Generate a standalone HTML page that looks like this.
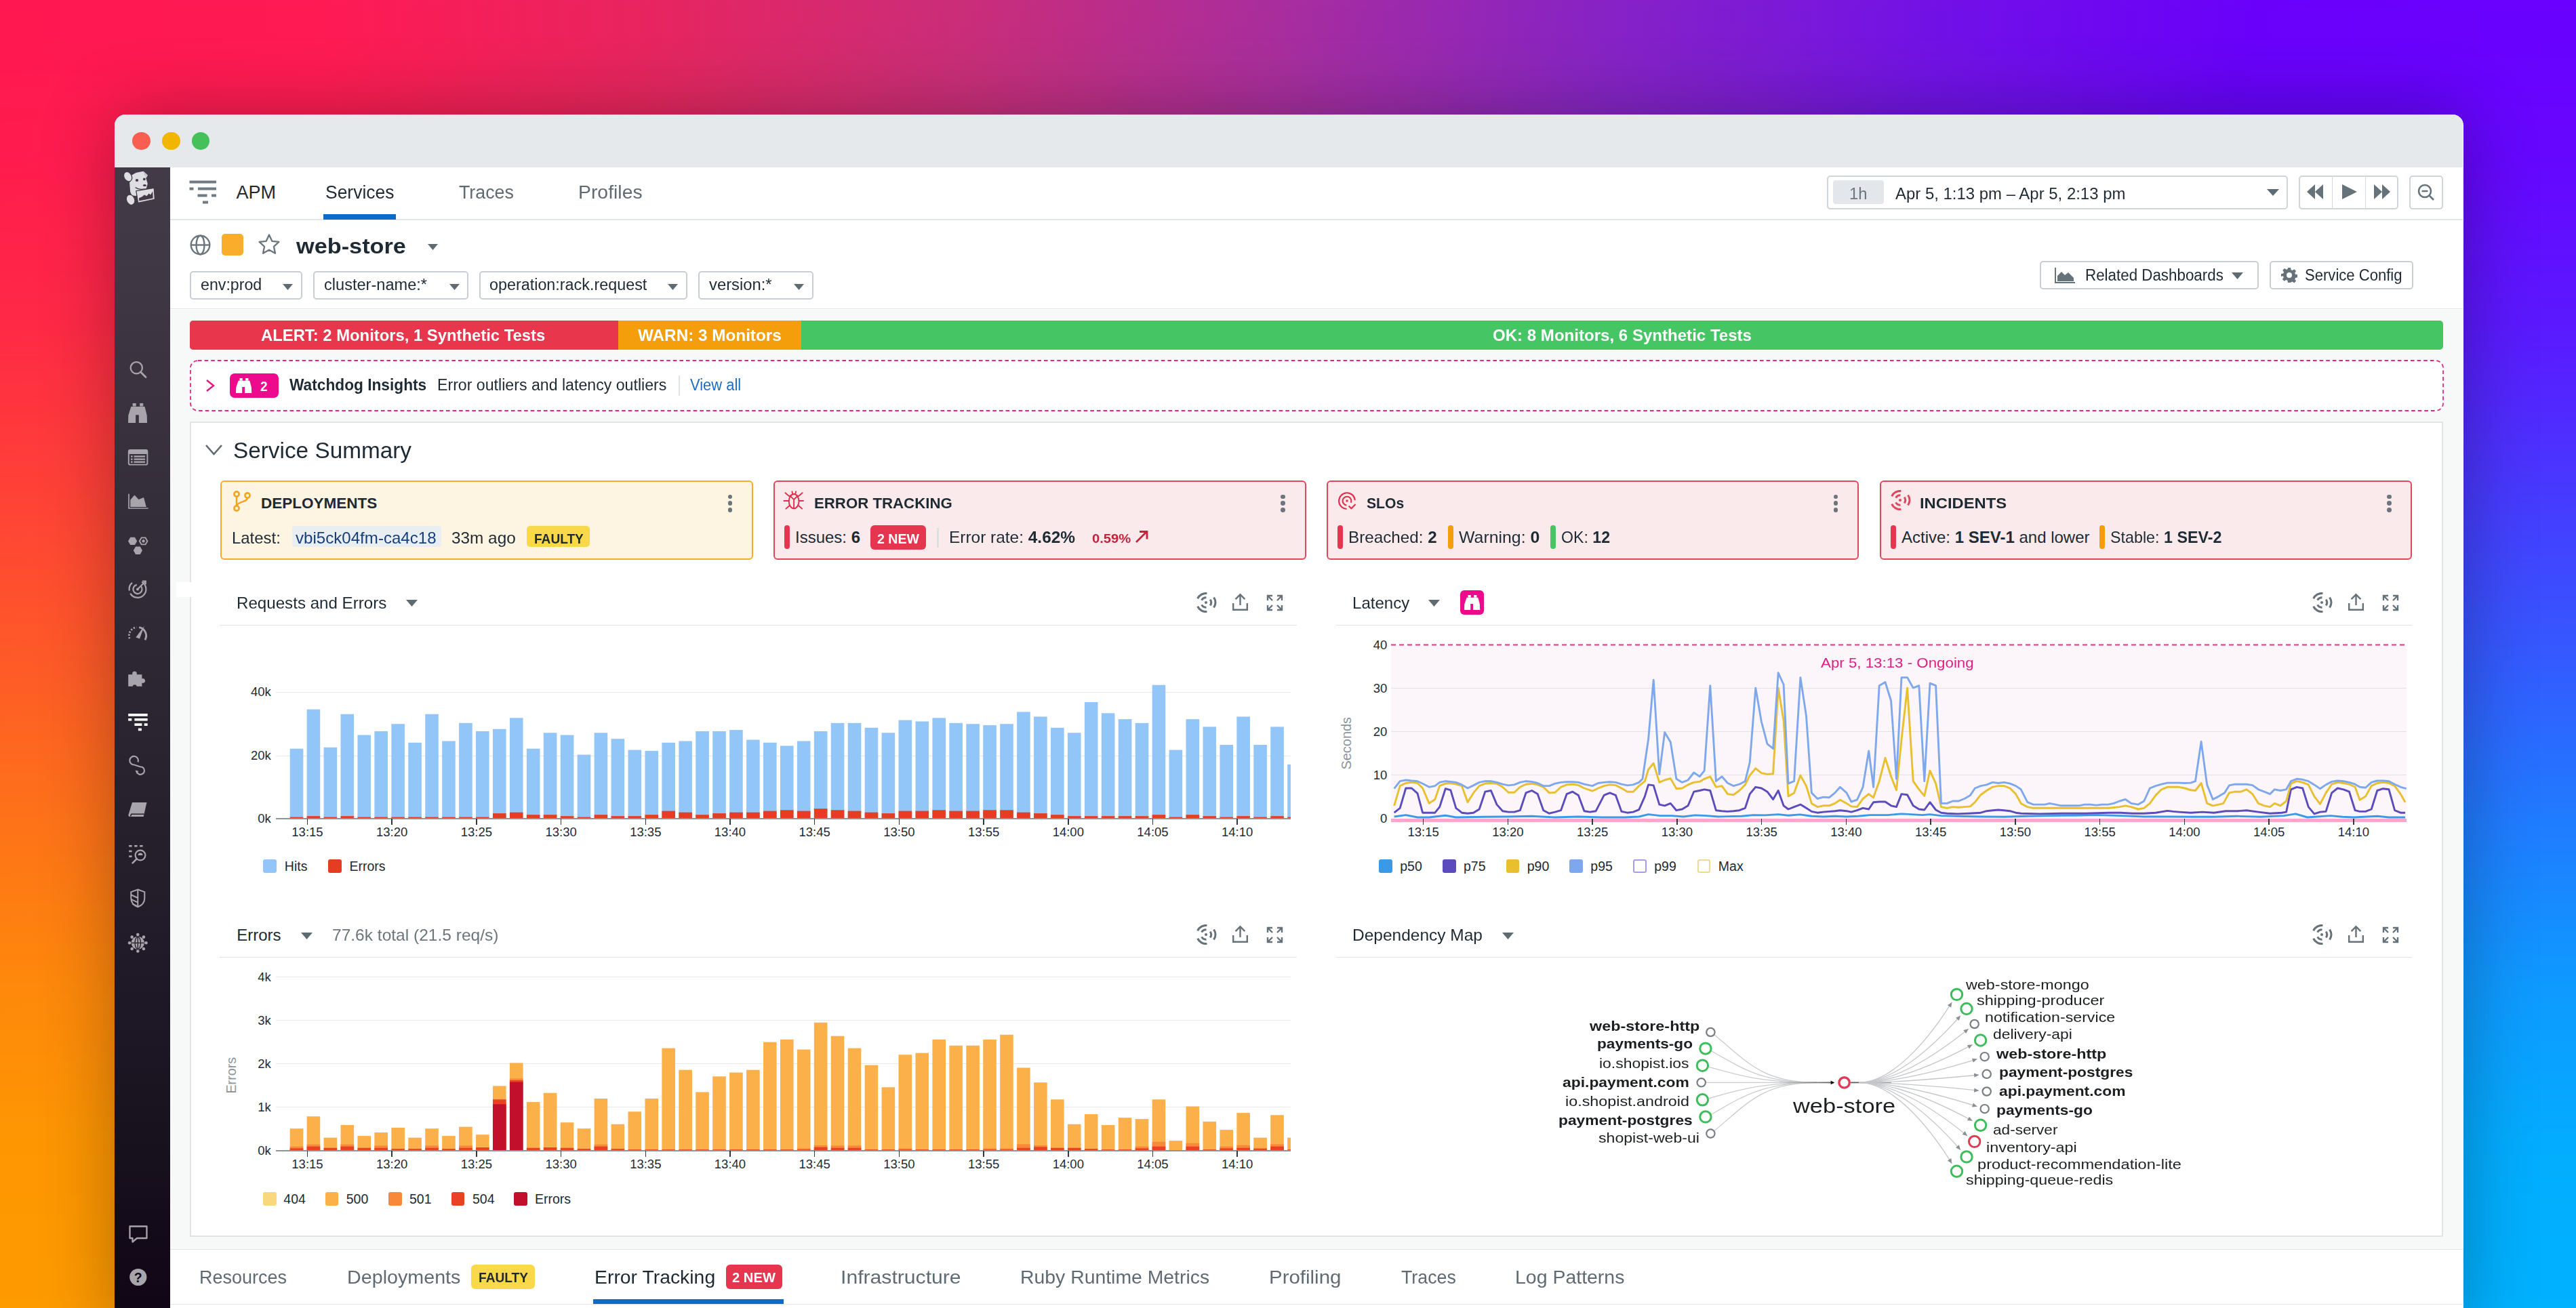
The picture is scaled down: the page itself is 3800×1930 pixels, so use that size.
<!DOCTYPE html><html><head><meta charset="utf-8"><style>
*{margin:0;padding:0;box-sizing:border-box}
html,body{width:3800px;height:1930px;overflow:hidden;font-family:"Liberation Sans",sans-serif}
body{position:relative;background:#ff9a00}
.abs,.t,.box{position:absolute}
.t{white-space:nowrap;transform-origin:0 0}
.box{border:2px solid #cfd4d8;background:#fff}
#bg{position:absolute;left:0;top:0;width:3800px;height:1930px;background:linear-gradient(90deg,#ff1751 0%,#ff1a55 12.5%,#e82460 25%,#ca2d7a 37.5%,#a82d9f 50%,#8722c6 62.5%,#7311e6 75%,#6a00fa 87.5%,#6a00ff 100%)}
#bg2{position:absolute;left:0;top:0;width:3800px;height:1930px;background:linear-gradient(90deg,#fe9b00 0%,#fe9b00 10%,#00b2ff 90%,#00b2ff 100%);
 -webkit-mask-image:linear-gradient(180deg,rgba(0,0,0,0) 0%,rgba(0,0,0,.04) 12.5%,rgba(0,0,0,.14) 25%,rgba(0,0,0,.32) 37.5%,rgba(0,0,0,.5) 50%,rgba(0,0,0,.69) 62.5%,rgba(0,0,0,.86) 75%,rgba(0,0,0,.97) 87.5%,#000 100%);
 mask-image:linear-gradient(180deg,rgba(0,0,0,0) 0%,rgba(0,0,0,.04) 12.5%,rgba(0,0,0,.14) 25%,rgba(0,0,0,.32) 37.5%,rgba(0,0,0,.5) 50%,rgba(0,0,0,.69) 62.5%,rgba(0,0,0,.86) 75%,rgba(0,0,0,.97) 87.5%,#000 100%)}
#win{position:absolute;left:169px;top:169px;width:3464.5px;height:1800px;border-radius:16px;background:#fff;overflow:hidden;
 box-shadow:0 0 110px rgba(0,0,0,.3)}
#titlebar{position:absolute;left:0;top:0;width:3464px;height:78px;background:#e5e9ec}
.tl{position:absolute;top:25.8px;width:26.6px;height:26.6px;border-radius:50%}
#sidebar{position:absolute;left:0;top:78px;width:82px;height:1722px;background:linear-gradient(180deg,#423b47 0%,#3f3844 9.5%,#2e2834 41.4%,#1f1826 70.4%,#17101d 85%,#110616 96.9%,#100515 100%)}
#header{position:absolute;left:82px;top:78px;width:3382px;height:209px;background:#fff;border-bottom:1.5px solid #e3e6e8}
#header:before{content:"";position:absolute;left:0;top:76px;width:3382px;height:1.5px;background:#e3e6e8}
#content{position:absolute;left:82px;top:288px;width:3382px;height:1386px;background:#f7f9f8}
#tabbar{position:absolute;left:82px;top:1674px;width:3382px;height:82px;background:#fff;border-top:1.5px solid #e2e4e6;border-bottom:1.5px solid #e2e4e6}
</style></head><body><div id="bg"></div><div id="bg2"></div>
<div id="win">
  <div id="titlebar"></div>
  <div class="tl" style="left:26.2px;background:#f95f50"></div>
  <div class="tl" style="left:70.2px;background:#f2b600"></div>
  <div class="tl" style="left:113.7px;background:#45c05a"></div>
  <div id="sidebar"></div>
  <div id="header"></div>
  <div id="content"></div>
  <div id="tabbar"></div>
</div>
<svg class="abs" style="left:279px;top:266px" width="41" height="36" viewBox="0 0 41 36">
<g fill="#6f7b82"><rect x="0.5" y="0.5" width="39.5" height="4"/><rect x="0.5" y="10.5" width="6" height="4"/><rect x="13" y="10.5" width="27" height="4"/>
<rect x="12.5" y="20.5" width="14" height="4"/><rect x="33" y="20.5" width="7" height="4"/><rect x="20" y="30.5" width="8" height="4"/></g></svg>
<div class="t" style="left:348.40px;top:271.34px;font-size:27px;line-height:27px;font-weight:400;color:#1d2a33;">APM</div>
<div class="t" style="left:479.80px;top:270.94px;font-size:27px;line-height:27px;font-weight:400;color:#1d2a33;transform:scaleX(0.9803);">Services</div>
<div class="t" style="left:676.50px;top:270.94px;font-size:27px;line-height:27px;font-weight:400;color:#5f6b72;transform:scaleX(0.9922);">Traces</div>
<div class="t" style="left:852.60px;top:270.94px;font-size:27px;line-height:27px;font-weight:400;color:#5f6b72;transform:scaleX(1.0506);">Profiles</div>
<div class="abs" style="left:477.4px;top:316px;width:106.6px;height:8px;background:#0b6bcb"></div>
<div class="box" style="left:2695px;top:258.6px;width:680px;height:50px;border-radius:5px"></div>
<div class="abs" style="left:2703.6px;top:266.4px;width:75.4px;height:34.6px;background:#e3e7ec;border-radius:4px"></div>
<div class="t" style="left:2727.60px;top:275.03px;font-size:23px;line-height:23px;font-weight:400;color:#6b767d;transform:scaleX(1.0341);">1h</div>
<div class="t" style="left:2795.60px;top:274.61px;font-size:23.5px;line-height:23.5px;font-weight:400;color:#1d2a33;transform:scaleX(1.0189);">Apr 5, 1:13 pm – Apr 5, 2:13 pm</div>
<svg class="abs" style="left:3343.5px;top:279px" width="18" height="10"><path d="M0 0h18L9 10z" fill="#5f6b72"/></svg>
<div class="box" style="left:3390.7px;top:258.6px;width:147.3px;height:50px;border-radius:5px"></div>
<div class="abs" style="left:3440px;top:259px;width:1px;height:49px;background:#d5d9dd"></div>
<div class="abs" style="left:3489px;top:259px;width:1px;height:49px;background:#d5d9dd"></div>
<div class="box" style="left:3553.7px;top:258.6px;width:50px;height:50px;border-radius:5px"></div>
<svg class="abs" style="left:3403px;top:272px" width="26" height="22" viewBox="0 0 26 22"><g fill="#66727a"><path d="M12 0v22L0 11z"/><path d="M24 0v22L12 11z"/></g></svg>
<svg class="abs" style="left:3455px;top:272px" width="22" height="22" viewBox="0 0 22 22"><path d="M0 0l22 11L0 22z" fill="#66727a"/></svg>
<svg class="abs" style="left:3502px;top:272px" width="26" height="22" viewBox="0 0 26 22"><g fill="#66727a"><path d="M0 0v22L12 11z"/><path d="M12 0v22L24 11z"/></g></svg>
<svg class="abs" style="left:3566px;top:271px" width="26" height="26" viewBox="0 0 26 26"><g fill="none" stroke="#66727a" stroke-width="2.6"><circle cx="11" cy="11" r="9"/><path d="M17.5 17.5L24 24M6.5 11h9"/></g></svg>
<svg class="abs" style="left:280px;top:346px" width="31" height="31" viewBox="0 0 31 31"><g fill="none" stroke="#6a767d" stroke-width="2.4">
<circle cx="15.5" cy="15.5" r="13.8"/><ellipse cx="15.5" cy="15.5" rx="6" ry="13.8"/><path d="M1.7 15.5h27.6"/></g></svg>
<div class="abs" style="left:326.6px;top:345.4px;width:32.3px;height:32px;background:#f9ad2b;border-radius:5px"></div>
<svg class="abs" style="left:380px;top:344px" width="34" height="33" viewBox="0 0 34 33"><path d="M17 2.5l4.3 9.3 10.1 1.1-7.5 6.9 2.1 10-9-5.1-9 5.1 2.1-10-7.5-6.9 10.1-1.1z" fill="none" stroke="#6a767d" stroke-width="2.3" stroke-linejoin="round"/></svg>
<div class="t" style="left:437.37px;top:346.91px;font-size:32px;line-height:32px;font-weight:700;color:#1d2a33;transform:scaleX(1.0710);">web-store</div>
<svg class="abs" style="left:631px;top:360px" width="15" height="9"><path d="M0 0h15L7.5 9z" fill="#5f6b72"/></svg>
<div class="box" style="left:280px;top:399.5px;width:165.60000000000002px;height:42px;border-radius:5px;border-color:#c9ced3"></div><div class="t" style="left:296.00px;top:409.11px;font-size:23.5px;line-height:23.5px;font-weight:400;color:#1d2a33;transform:scaleX(0.9867);">env:prod</div><svg class="abs" style="left:417.1px;top:419px" width="15" height="9"><path d="M0 0h15L7.5 9z" fill="#5f6b72"/></svg>
<div class="box" style="left:462px;top:399.5px;width:229px;height:42px;border-radius:5px;border-color:#c9ced3"></div><div class="t" style="left:478.00px;top:409.11px;font-size:23.5px;line-height:23.5px;font-weight:400;color:#1d2a33;transform:scaleX(1.0036);">cluster-name:*</div><svg class="abs" style="left:662.5px;top:419px" width="15" height="9"><path d="M0 0h15L7.5 9z" fill="#5f6b72"/></svg>
<div class="box" style="left:707px;top:399.5px;width:306.5px;height:42px;border-radius:5px;border-color:#c9ced3"></div><div class="t" style="left:722.20px;top:409.11px;font-size:23.5px;line-height:23.5px;font-weight:400;color:#1d2a33;transform:scaleX(0.9935);">operation:rack.request</div><svg class="abs" style="left:985.0px;top:419px" width="15" height="9"><path d="M0 0h15L7.5 9z" fill="#5f6b72"/></svg>
<div class="box" style="left:1029.5px;top:399.5px;width:170.0px;height:42px;border-radius:5px;border-color:#c9ced3"></div><div class="t" style="left:1046.00px;top:409.11px;font-size:23.5px;line-height:23.5px;font-weight:400;color:#1d2a33;transform:scaleX(1.0130);">version:*</div><svg class="abs" style="left:1171.0px;top:419px" width="15" height="9"><path d="M0 0h15L7.5 9z" fill="#5f6b72"/></svg>
<div class="box" style="left:3008.7px;top:384.8px;width:323.3px;height:42.2px;border-radius:5px;border-color:#c9ced3"></div>
<div class="box" style="left:3348px;top:384.8px;width:211.6px;height:42.2px;border-radius:5px;border-color:#c9ced3"></div>
<svg class="abs" style="left:3031px;top:395px" width="30" height="23" viewBox="0 0 30 23"><path d="M1 0v22h29" fill="none" stroke="#66727a" stroke-width="2"/><path d="M4 20V12l6-6 5 5 5-4 8 8v5z" fill="#66727a"/></svg>
<svg class="abs" style="left:3292px;top:402px" width="17" height="10"><path d="M0 0h17L8.5 10z" fill="#5f6b72"/></svg>
<svg class="abs" style="left:3365px;top:394px" width="24" height="24" viewBox="0 0 24 24"><path fill="#66727a" d="M10 1h4l.6 3.2 2 .9 2.7-1.9 2.8 2.8-1.9 2.7.9 2 3.2.6v4l-3.2.6-.9 2 1.9 2.7-2.8 2.8-2.7-1.9-2 .9L14 23h-4l-.6-3.2-2-.9-2.7 1.9-2.8-2.8 1.9-2.7-.9-2L0 14v-4l3.2-.6.9-2L2.2 4.7 5 1.9l2.7 1.9 2-.9zM12 8a4 4 0 100 8 4 4 0 000-8z"/></svg>
<div class="t" style="left:3075.90px;top:395.23px;font-size:23px;line-height:23px;font-weight:400;color:#1d2a33;transform:scaleX(0.9721);">Related Dashboards</div>
<div class="t" style="left:3400.00px;top:395.23px;font-size:23px;line-height:23px;font-weight:400;color:#1d2a33;transform:scaleX(0.9598);">Service Config</div>
<div class="abs" style="left:280px;top:473px;width:3324px;height:43px;border-radius:5px;overflow:hidden;background:#45c563">
<div class="abs" style="left:0;top:0;width:632px;height:43px;background:#e8364c"></div>
<div class="abs" style="left:632px;top:0;width:270px;height:43px;background:#f59e0b"></div></div>
<div class="t" style="left:385.40px;top:482.86px;font-size:24.5px;line-height:24.5px;font-weight:700;color:#fff;transform:scaleX(0.9724);">ALERT: 2 Monitors, 1 Synthetic Tests</div>
<div class="t" style="left:941.00px;top:482.86px;font-size:24.5px;line-height:24.5px;font-weight:700;color:#fff;transform:scaleX(0.9909);">WARN: 3 Monitors</div>
<div class="t" style="left:2202.40px;top:482.86px;font-size:24.5px;line-height:24.5px;font-weight:700;color:#fff;transform:scaleX(0.9822);">OK: 8 Monitors, 6 Synthetic Tests</div>
<svg class="abs" style="left:279.5px;top:530.5px" width="3326" height="77"><rect x="1" y="1" width="3323" height="74" rx="11" fill="#fff" stroke="#e0287f" stroke-width="1.8" stroke-dasharray="5.6 4"/></svg>
<svg class="abs" style="left:303px;top:559px" width="15" height="20"><path d="M2 2l10 8-10 8" fill="none" stroke="#e5177f" stroke-width="2.4"/></svg>
<div class="abs" style="left:339px;top:551.2px;width:72.3px;height:35.5px;background:#ee0a8c;border-radius:7px"></div>
<svg class="abs" style="left:348.3px;top:557.7px" width="24" height="23" viewBox="0 0 24 23"><path fill="#fff" d="M5.5 0h4.2v3.5H5.5zM14.2 0h4.2v3.5h-4.2zM3.6 3.8h16.7l2.6 9.7.3 8.6H13.1v-9H9.2v9H0l.3-8.6z"/></svg>
<div class="t" style="left:384.40px;top:560.37px;font-size:20px;line-height:20px;font-weight:700;color:#fff;transform:scaleX(0.9550);">2</div>
<div class="t" style="left:426.70px;top:557.41px;font-size:23.5px;line-height:23.5px;font-weight:700;color:#1d2a33;transform:scaleX(0.9662);">Watchdog Insights</div>
<div class="t" style="left:645.20px;top:557.41px;font-size:23.5px;line-height:23.5px;font-weight:400;color:#1d2a33;transform:scaleX(0.9850);">Error outliers and latency outliers</div>
<div class="abs" style="left:1001px;top:554px;width:2px;height:29.5px;background:#dfe3e6"></div>
<div class="t" style="left:1017.80px;top:557.41px;font-size:23.5px;line-height:23.5px;font-weight:400;color:#1a6cc4;transform:scaleX(0.9329);">View all</div>
<div class="box" style="left:280px;top:622px;width:3324px;height:1202.5px;border-color:#e2e4e4;border-radius:0"></div>
<svg class="abs" style="left:302px;top:655px" width="27" height="18"><path d="M2 2l11.5 13L25 2" fill="none" stroke="#5f6b72" stroke-width="2.6"/></svg>
<div class="t" style="left:343.50px;top:647.87px;font-size:33px;line-height:33px;font-weight:400;color:#1d2a33;transform:scaleX(1.0101);">Service Summary</div>
<div class="abs" style="left:260px;top:859px;width:22px;height:21.5px;background:#fff"></div>
<div class="box" style="left:324.7px;top:708.6px;width:786.3px;height:117.9px;border-radius:6px;background:#fdf4e2;border:2px solid #f2ac2a"></div>
<div class="box" style="left:1141px;top:708.6px;width:786px;height:117.9px;border-radius:6px;background:#fbeaec;border:2px solid #e3455c"></div>
<div class="box" style="left:1956.5px;top:708.6px;width:785.8000000000002px;height:117.9px;border-radius:6px;background:#fbeaec;border:2px solid #e3455c"></div>
<div class="box" style="left:2772.7px;top:708.6px;width:785.3000000000002px;height:117.9px;border-radius:6px;background:#fbeaec;border:2px solid #e3455c"></div>
<div class="abs" style="left:1073.6px;top:729.6px;width:6.8px;height:6.8px;border-radius:3.4px;background:#6b757b"></div><div class="abs" style="left:1073.6px;top:739.4px;width:6.8px;height:6.8px;border-radius:3.4px;background:#6b757b"></div><div class="abs" style="left:1073.6px;top:749.2px;width:6.8px;height:6.8px;border-radius:3.4px;background:#6b757b"></div>
<div class="abs" style="left:1889.1px;top:729.6px;width:6.8px;height:6.8px;border-radius:3.4px;background:#6b757b"></div><div class="abs" style="left:1889.1px;top:739.4px;width:6.8px;height:6.8px;border-radius:3.4px;background:#6b757b"></div><div class="abs" style="left:1889.1px;top:749.2px;width:6.8px;height:6.8px;border-radius:3.4px;background:#6b757b"></div>
<div class="abs" style="left:2704.6px;top:729.6px;width:6.8px;height:6.8px;border-radius:3.4px;background:#6b757b"></div><div class="abs" style="left:2704.6px;top:739.4px;width:6.8px;height:6.8px;border-radius:3.4px;background:#6b757b"></div><div class="abs" style="left:2704.6px;top:749.2px;width:6.8px;height:6.8px;border-radius:3.4px;background:#6b757b"></div>
<div class="abs" style="left:3521.2px;top:729.6px;width:6.8px;height:6.8px;border-radius:3.4px;background:#6b757b"></div><div class="abs" style="left:3521.2px;top:739.4px;width:6.8px;height:6.8px;border-radius:3.4px;background:#6b757b"></div><div class="abs" style="left:3521.2px;top:749.2px;width:6.8px;height:6.8px;border-radius:3.4px;background:#6b757b"></div>
<svg class="abs" style="left:344px;top:724px" width="27" height="31" viewBox="0 0 27 31"><g fill="none" stroke="#f2a51f" stroke-width="2.6">
<circle cx="5" cy="5" r="3.6"/><circle cx="21" cy="7" r="3.6"/><circle cx="5" cy="26" r="3.6"/><path d="M5 8.6v13.8M21 10.6c0 7-15 5-15.6 11.6"/></g></svg>
<div class="t" style="left:385.00px;top:732.25px;font-size:22.5px;line-height:22.5px;font-weight:700;color:#1d2a33;">DEPLOYMENTS</div>
<div class="t" style="left:341.70px;top:782.28px;font-size:24px;line-height:24px;font-weight:400;color:#1d2a33;transform:scaleX(0.9972);">Latest:</div>
<div class="abs" style="left:430.6px;top:776px;width:220.4px;height:30.7px;background:#e9eef3;border-radius:4px"></div>
<div class="t" style="left:436.40px;top:782.28px;font-size:24px;line-height:24px;font-weight:400;color:#173f7a;transform:scaleX(1.0041);">vbi5ck04fm-ca4c18</div>
<div class="t" style="left:666.30px;top:782.28px;font-size:24px;line-height:24px;font-weight:400;color:#1d2a33;transform:scaleX(1.0144);">33m ago</div>
<div class="abs" style="left:777.3px;top:776px;width:93px;height:30.7px;background:#f9d94a;border-radius:5px"></div>
<div class="t" style="left:787.60px;top:784.67px;font-size:20px;line-height:20px;font-weight:700;color:#1d2a33;transform:scaleX(0.9541);">FAULTY</div>
<svg class="abs" style="left:1150px;top:718px" width="50" height="40" viewBox="0 0 50 40"><g fill="none" stroke="#e02e4b" stroke-width="1.9" stroke-linecap="round">
<ellipse cx="21.1" cy="21.6" rx="7.4" ry="10.6"/><path d="M15.6 13.6L21.1 19.2 26.6 13.6M21.1 19.2V32M18.4 7.2L19.1 10.4M24.1 7.2L23.4 10.4M8.4 9.3L14.4 14.4M33.6 9.3L27.6 14.4M6.4 21H13.6M28.6 21H35M9.4 32.6L14.4 28.2M33.2 32.6L28.2 28.2"/></g></svg>
<div class="t" style="left:1200.70px;top:732.05px;font-size:22.5px;line-height:22.5px;font-weight:700;color:#1d2a33;transform:scaleX(0.9878);">ERROR TRACKING</div>
<div class="abs" style="left:1157px;top:775.3px;width:8px;height:35.0px;border-radius:4px;background:#e5354f"></div>
<div class="t" style="left:1173.00px;top:781.08px;font-size:24px;line-height:24px;color:#1c2b34;"><span style="font-weight:400;color:#1c2b34">Issues: </span><span style="font-weight:700;color:#1c2b34">6</span></div>
<div class="abs" style="left:1284.4px;top:775.3px;width:81.2px;height:35.7px;background:#e5354f;border-radius:6px"></div>
<div class="t" style="left:1294.00px;top:783.62px;font-size:21px;line-height:21px;font-weight:700;color:#fff;transform:scaleX(0.9314);">2 NEW</div>
<div class="abs" style="left:1382px;top:778.5px;width:2.5px;height:29.3px;background:#dde0e3"></div>
<div class="t" style="left:1400.00px;top:781.08px;font-size:24px;line-height:24px;color:#1c2b34;transform:scaleX(1.0179);"><span style="font-weight:400;color:#1c2b34">Error rate: </span><span style="font-weight:700;color:#1c2b34">4.62%</span></div>
<div class="t" style="left:1610.70px;top:785.32px;font-size:19px;line-height:19px;font-weight:700;color:#c4233b;transform:scaleX(1.0638);">0.59%</div>
<svg class="abs" style="left:1674px;top:782px" width="21" height="20" viewBox="0 0 21 20"><path d="M2 18L17 3M7 2.5h11v11" fill="none" stroke="#c4233b" stroke-width="2.8"/></svg>
<svg class="abs" style="left:1965px;top:718px" width="50" height="40" viewBox="0 0 50 40"><g fill="none" stroke="#e02e4b" stroke-width="2.1"><path d="M33.85 20.06A11.9 11.9 0 1 0 21.58 32.99"/><path d="M27.80 23.80A6.4 6.4 0 1 0 21.44 27.48"/><path d="M24.5 28.6L28.4 32.2 34.6 26"/></g><rect x="20.5" y="19.5" width="3" height="3" fill="#e02e4b"/></svg>
<div class="t" style="left:2016.40px;top:732.05px;font-size:22.5px;line-height:22.5px;font-weight:700;color:#1d2a33;transform:scaleX(0.9383);">SLOs</div>
<div class="abs" style="left:1972.8px;top:775.3px;width:8px;height:35.0px;border-radius:4px;background:#e5354f"></div>
<div class="abs" style="left:2135.8px;top:775.3px;width:8px;height:35.0px;border-radius:4px;background:#f59e0b"></div>
<div class="abs" style="left:2287px;top:775.3px;width:8px;height:35.0px;border-radius:4px;background:#45c563"></div>
<div class="t" style="left:1989.30px;top:781.08px;font-size:24px;line-height:24px;color:#1c2b34;transform:scaleX(1.0101);"><span style="font-weight:400;color:#1c2b34">Breached: </span><span style="font-weight:700;color:#1c2b34">2</span></div>
<div class="t" style="left:2151.70px;top:781.08px;font-size:24px;line-height:24px;color:#1c2b34;transform:scaleX(1.0362);"><span style="font-weight:400;color:#1c2b34">Warning: </span><span style="font-weight:700;color:#1c2b34">0</span></div>
<div class="t" style="left:2303.00px;top:781.08px;font-size:24px;line-height:24px;color:#1c2b34;transform:scaleX(0.9645);"><span style="font-weight:400;color:#1c2b34">OK: </span><span style="font-weight:700;color:#1c2b34">12</span></div>
<svg class="abs" style="left:2788.20px;top:722.80px" width="32" height="30" viewBox="0 0 32 30"><path d="M16.42 1.47A13.6 13.6 0 0 0 2.67 9.25 M2.67 20.75A13.6 13.6 0 0 0 16.42 28.53 M15.50 7.82A7.2 7.2 0 0 0 8.64 11.62 M8.64 18.38A7.2 7.2 0 0 0 15.50 22.18 M21.15 10.53A7.6 7.6 0 0 1 21.15 19.47 M26.57 7.48A13.8 13.8 0 0 1 26.57 22.52" fill="none" stroke="#e3455c" stroke-width="3" /><circle cx="15" cy="15" r="2.1" fill="#e3455c"/></svg>
<div class="t" style="left:2831.80px;top:732.05px;font-size:22.5px;line-height:22.5px;font-weight:700;color:#1d2a33;transform:scaleX(1.0571);">INCIDENTS</div>
<div class="abs" style="left:2789px;top:775.3px;width:8px;height:35.0px;border-radius:4px;background:#e5354f"></div>
<div class="abs" style="left:3097px;top:775.3px;width:8px;height:35.0px;border-radius:4px;background:#f59e0b"></div>
<div class="t" style="left:2805.00px;top:781.08px;font-size:24px;line-height:24px;color:#1c2b34;"><span style="font-weight:400;color:#1c2b34">Active: </span><span style="font-weight:700;color:#1c2b34">1 SEV-1</span><span style="font-weight:400;color:#1c2b34"> and lower</span></div>
<div class="t" style="left:3113.00px;top:781.08px;font-size:24px;line-height:24px;color:#1c2b34;transform:scaleX(0.9707);"><span style="font-weight:400;color:#1c2b34">Stable: </span><span style="font-weight:700;color:#1c2b34">1 SEV-2</span></div>
<div class="t" style="left:349.20px;top:877.68px;font-size:24px;line-height:24px;font-weight:400;color:#1d2a33;transform:scaleX(1.0055);">Requests and Errors</div><svg class="abs" style="left:599.4px;top:885.4px" width="17" height="10"><path d="M0 0h17L8.5 10z" fill="#5f6b72"/></svg><div class="abs" style="left:324px;top:921.5px;width:1589px;height:1.6px;background:#e1e4e6"></div><svg class="abs" style="left:1763.90px;top:873.90px" width="32" height="30" viewBox="0 0 32 30"><path d="M16.42 1.47A13.6 13.6 0 0 0 2.67 9.25 M2.67 20.75A13.6 13.6 0 0 0 16.42 28.53 M15.50 7.82A7.2 7.2 0 0 0 8.64 11.62 M8.64 18.38A7.2 7.2 0 0 0 15.50 22.18 M21.15 10.53A7.6 7.6 0 0 1 21.15 19.47 M26.57 7.48A13.8 13.8 0 0 1 26.57 22.52" fill="none" stroke="#66727a" stroke-width="3" /><circle cx="15" cy="15" r="2.1" fill="#66727a"/></svg><svg class="abs" style="left:1815px;top:874px" width="30" height="28" viewBox="0 0 30 28"><g fill="none" stroke="#66727a" stroke-width="2.4"><path d="M4.2 16v9.8h20.6V16M14.5 19V3.2M7.6 10.2l6.9-7 6.9 7"/></g></svg>
<svg class="abs" style="left:1868px;top:877px" width="25" height="25" viewBox="0 0 25 25"><g fill="none" stroke="#66727a" stroke-width="2.4"><path d="M2 9V2h7M2 2l7 7M23 9V2h-7M23 2l-7 7M2 16v7h7M2 23l7-7M23 16v7h-7M23 23l-7-7"/></g></svg><div class="abs" style="left:406.7px;top:1020.5px;width:1497px;height:1.2px;background:#e4e6e8"></div><div class="t" style="left:369.92px;top:1012.14px;font-size:18.5px;line-height:18.5px;font-weight:400;color:#1d2a33;">40k</div><div class="abs" style="left:406.7px;top:1114.5px;width:1497px;height:1.2px;background:#e4e6e8"></div><div class="t" style="left:369.92px;top:1106.14px;font-size:18.5px;line-height:18.5px;font-weight:400;color:#1d2a33;">20k</div><div class="t" style="left:380.19px;top:1199.14px;font-size:18.5px;line-height:18.5px;font-weight:400;color:#1d2a33;">0k</div><svg class="abs" style="left:0;top:0" width="3800" height="1930"><defs><clipPath id="c1"><rect x="406" y="900" width="1498" height="320"/></clipPath></defs><g clip-path="url(#c1)"><rect x="427.70" y="1104.68" width="19.6" height="103.32" fill="#92c5f8"/><rect x="427.70" y="1205.60" width="19.6" height="2.40" fill="#e53d21"/><rect x="452.64" y="1046.71" width="19.6" height="161.29" fill="#92c5f8"/><rect x="452.64" y="1204.20" width="19.6" height="3.80" fill="#e53d21"/><rect x="477.58" y="1102.81" width="19.6" height="105.19" fill="#92c5f8"/><rect x="477.58" y="1205.60" width="19.6" height="2.40" fill="#e53d21"/><rect x="502.52" y="1053.72" width="19.6" height="154.28" fill="#92c5f8"/><rect x="502.52" y="1204.20" width="19.6" height="3.80" fill="#e53d21"/><rect x="527.46" y="1084.58" width="19.6" height="123.42" fill="#92c5f8"/><rect x="527.46" y="1205.60" width="19.6" height="2.40" fill="#e53d21"/><rect x="552.40" y="1078.97" width="19.6" height="129.03" fill="#92c5f8"/><rect x="552.40" y="1205.60" width="19.6" height="2.40" fill="#e53d21"/><rect x="577.34" y="1068.22" width="19.6" height="139.78" fill="#92c5f8"/><rect x="577.34" y="1205.60" width="19.6" height="2.40" fill="#e53d21"/><rect x="602.28" y="1095.80" width="19.6" height="112.20" fill="#92c5f8"/><rect x="602.28" y="1205.60" width="19.6" height="2.40" fill="#e53d21"/><rect x="627.22" y="1053.72" width="19.6" height="154.28" fill="#92c5f8"/><rect x="627.22" y="1205.60" width="19.6" height="2.40" fill="#e53d21"/><rect x="652.16" y="1093.46" width="19.6" height="114.54" fill="#92c5f8"/><rect x="652.16" y="1205.60" width="19.6" height="2.40" fill="#e53d21"/><rect x="677.10" y="1066.82" width="19.6" height="141.19" fill="#92c5f8"/><rect x="677.10" y="1205.60" width="19.6" height="2.40" fill="#e53d21"/><rect x="702.04" y="1078.97" width="19.6" height="129.03" fill="#92c5f8"/><rect x="702.04" y="1205.60" width="19.6" height="2.40" fill="#e53d21"/><rect x="726.98" y="1075.70" width="19.6" height="132.30" fill="#92c5f8"/><rect x="726.98" y="1200.10" width="19.6" height="7.90" fill="#e53d21"/><rect x="751.92" y="1059.34" width="19.6" height="148.67" fill="#92c5f8"/><rect x="751.92" y="1198.70" width="19.6" height="9.30" fill="#e53d21"/><rect x="776.86" y="1104.68" width="19.6" height="103.32" fill="#92c5f8"/><rect x="776.86" y="1202.20" width="19.6" height="5.80" fill="#e53d21"/><rect x="801.80" y="1081.31" width="19.6" height="126.69" fill="#92c5f8"/><rect x="801.80" y="1202.20" width="19.6" height="5.80" fill="#e53d21"/><rect x="826.74" y="1084.58" width="19.6" height="123.42" fill="#92c5f8"/><rect x="826.74" y="1204.20" width="19.6" height="3.80" fill="#e53d21"/><rect x="851.68" y="1113.57" width="19.6" height="94.44" fill="#92c5f8"/><rect x="851.68" y="1205.60" width="19.6" height="2.40" fill="#e53d21"/><rect x="876.62" y="1081.31" width="19.6" height="126.69" fill="#92c5f8"/><rect x="876.62" y="1202.20" width="19.6" height="5.80" fill="#e53d21"/><rect x="901.56" y="1090.19" width="19.6" height="117.81" fill="#92c5f8"/><rect x="901.56" y="1204.20" width="19.6" height="3.80" fill="#e53d21"/><rect x="926.50" y="1106.55" width="19.6" height="101.45" fill="#92c5f8"/><rect x="926.50" y="1204.20" width="19.6" height="3.80" fill="#e53d21"/><rect x="951.44" y="1107.95" width="19.6" height="100.04" fill="#92c5f8"/><rect x="951.44" y="1202.20" width="19.6" height="5.80" fill="#e53d21"/><rect x="976.38" y="1095.80" width="19.6" height="112.20" fill="#92c5f8"/><rect x="976.38" y="1196.60" width="19.6" height="11.40" fill="#e53d21"/><rect x="1001.32" y="1093.46" width="19.6" height="114.54" fill="#92c5f8"/><rect x="1001.32" y="1198.70" width="19.6" height="9.30" fill="#e53d21"/><rect x="1026.26" y="1078.97" width="19.6" height="129.03" fill="#92c5f8"/><rect x="1026.26" y="1202.20" width="19.6" height="5.80" fill="#e53d21"/><rect x="1051.20" y="1078.97" width="19.6" height="129.03" fill="#92c5f8"/><rect x="1051.20" y="1200.10" width="19.6" height="7.90" fill="#e53d21"/><rect x="1076.14" y="1077.10" width="19.6" height="130.90" fill="#92c5f8"/><rect x="1076.14" y="1198.70" width="19.6" height="9.30" fill="#e53d21"/><rect x="1101.08" y="1091.59" width="19.6" height="116.41" fill="#92c5f8"/><rect x="1101.08" y="1198.70" width="19.6" height="9.30" fill="#e53d21"/><rect x="1126.02" y="1095.80" width="19.6" height="112.20" fill="#92c5f8"/><rect x="1126.02" y="1196.60" width="19.6" height="11.40" fill="#e53d21"/><rect x="1150.96" y="1100.47" width="19.6" height="107.53" fill="#92c5f8"/><rect x="1150.96" y="1195.30" width="19.6" height="12.70" fill="#e53d21"/><rect x="1175.90" y="1093.46" width="19.6" height="114.54" fill="#92c5f8"/><rect x="1175.90" y="1196.60" width="19.6" height="11.40" fill="#e53d21"/><rect x="1200.84" y="1078.97" width="19.6" height="129.03" fill="#92c5f8"/><rect x="1200.84" y="1193.20" width="19.6" height="14.80" fill="#e53d21"/><rect x="1225.78" y="1066.82" width="19.6" height="141.19" fill="#92c5f8"/><rect x="1225.78" y="1195.30" width="19.6" height="12.70" fill="#e53d21"/><rect x="1250.72" y="1066.82" width="19.6" height="141.19" fill="#92c5f8"/><rect x="1250.72" y="1196.60" width="19.6" height="11.40" fill="#e53d21"/><rect x="1275.66" y="1073.83" width="19.6" height="134.17" fill="#92c5f8"/><rect x="1275.66" y="1198.70" width="19.6" height="9.30" fill="#e53d21"/><rect x="1300.60" y="1081.31" width="19.6" height="126.69" fill="#92c5f8"/><rect x="1300.60" y="1200.10" width="19.6" height="7.90" fill="#e53d21"/><rect x="1325.54" y="1062.61" width="19.6" height="145.39" fill="#92c5f8"/><rect x="1325.54" y="1196.60" width="19.6" height="11.40" fill="#e53d21"/><rect x="1350.48" y="1064.48" width="19.6" height="143.52" fill="#92c5f8"/><rect x="1350.48" y="1196.60" width="19.6" height="11.40" fill="#e53d21"/><rect x="1375.42" y="1059.34" width="19.6" height="148.67" fill="#92c5f8"/><rect x="1375.42" y="1195.30" width="19.6" height="12.70" fill="#e53d21"/><rect x="1400.36" y="1066.82" width="19.6" height="141.19" fill="#92c5f8"/><rect x="1400.36" y="1196.60" width="19.6" height="11.40" fill="#e53d21"/><rect x="1425.30" y="1068.22" width="19.6" height="139.78" fill="#92c5f8"/><rect x="1425.30" y="1196.60" width="19.6" height="11.40" fill="#e53d21"/><rect x="1450.24" y="1070.09" width="19.6" height="137.91" fill="#92c5f8"/><rect x="1450.24" y="1195.30" width="19.6" height="12.70" fill="#e53d21"/><rect x="1475.18" y="1068.22" width="19.6" height="139.78" fill="#92c5f8"/><rect x="1475.18" y="1195.30" width="19.6" height="12.70" fill="#e53d21"/><rect x="1500.12" y="1050.45" width="19.6" height="157.55" fill="#92c5f8"/><rect x="1500.12" y="1198.70" width="19.6" height="9.30" fill="#e53d21"/><rect x="1525.06" y="1057.46" width="19.6" height="150.54" fill="#92c5f8"/><rect x="1525.06" y="1200.10" width="19.6" height="7.90" fill="#e53d21"/><rect x="1550.00" y="1073.83" width="19.6" height="134.17" fill="#92c5f8"/><rect x="1550.00" y="1202.20" width="19.6" height="5.80" fill="#e53d21"/><rect x="1574.94" y="1081.31" width="19.6" height="126.69" fill="#92c5f8"/><rect x="1574.94" y="1204.20" width="19.6" height="3.80" fill="#e53d21"/><rect x="1599.88" y="1035.96" width="19.6" height="172.04" fill="#92c5f8"/><rect x="1599.88" y="1204.20" width="19.6" height="3.80" fill="#e53d21"/><rect x="1624.82" y="1052.32" width="19.6" height="155.68" fill="#92c5f8"/><rect x="1624.82" y="1204.20" width="19.6" height="3.80" fill="#e53d21"/><rect x="1649.76" y="1061.20" width="19.6" height="146.80" fill="#92c5f8"/><rect x="1649.76" y="1204.20" width="19.6" height="3.80" fill="#e53d21"/><rect x="1674.70" y="1066.82" width="19.6" height="141.19" fill="#92c5f8"/><rect x="1674.70" y="1204.20" width="19.6" height="3.80" fill="#e53d21"/><rect x="1699.64" y="1010.71" width="19.6" height="197.29" fill="#92c5f8"/><rect x="1699.64" y="1202.20" width="19.6" height="5.80" fill="#e53d21"/><rect x="1724.58" y="1106.55" width="19.6" height="101.45" fill="#92c5f8"/><rect x="1724.58" y="1205.60" width="19.6" height="2.40" fill="#e53d21"/><rect x="1749.52" y="1061.20" width="19.6" height="146.80" fill="#92c5f8"/><rect x="1749.52" y="1202.20" width="19.6" height="5.80" fill="#e53d21"/><rect x="1774.46" y="1072.42" width="19.6" height="135.57" fill="#92c5f8"/><rect x="1774.46" y="1204.20" width="19.6" height="3.80" fill="#e53d21"/><rect x="1799.40" y="1099.07" width="19.6" height="108.93" fill="#92c5f8"/><rect x="1799.40" y="1205.60" width="19.6" height="2.40" fill="#e53d21"/><rect x="1824.34" y="1057.46" width="19.6" height="150.54" fill="#92c5f8"/><rect x="1824.34" y="1204.20" width="19.6" height="3.80" fill="#e53d21"/><rect x="1849.28" y="1099.07" width="19.6" height="108.93" fill="#92c5f8"/><rect x="1849.28" y="1205.60" width="19.6" height="2.40" fill="#e53d21"/><rect x="1874.22" y="1072.42" width="19.6" height="135.57" fill="#92c5f8"/><rect x="1874.22" y="1204.20" width="19.6" height="3.80" fill="#e53d21"/><rect x="1899.16" y="1128.06" width="19.6" height="79.94" fill="#92c5f8"/><rect x="1899.16" y="1205.60" width="19.6" height="2.40" fill="#e53d21"/></g></svg><div class="abs" style="left:406.7px;top:1207.2px;width:1497px;height:1.8px;background:#8d959a"></div><div class="abs" style="left:452.75px;top:1208px;width:1.5px;height:9px;background:#2f3a40"></div><div class="t" style="left:430.33px;top:1219.04px;font-size:18.5px;line-height:18.5px;font-weight:400;color:#1d2a33;">13:15</div><div class="abs" style="left:577.45px;top:1208px;width:1.5px;height:9px;background:#2f3a40"></div><div class="t" style="left:555.03px;top:1219.04px;font-size:18.5px;line-height:18.5px;font-weight:400;color:#1d2a33;">13:20</div><div class="abs" style="left:702.15px;top:1208px;width:1.5px;height:9px;background:#2f3a40"></div><div class="t" style="left:679.73px;top:1219.04px;font-size:18.5px;line-height:18.5px;font-weight:400;color:#1d2a33;">13:25</div><div class="abs" style="left:826.85px;top:1208px;width:1.5px;height:9px;background:#2f3a40"></div><div class="t" style="left:804.43px;top:1219.04px;font-size:18.5px;line-height:18.5px;font-weight:400;color:#1d2a33;">13:30</div><div class="abs" style="left:951.55px;top:1208px;width:1.5px;height:9px;background:#2f3a40"></div><div class="t" style="left:929.13px;top:1219.04px;font-size:18.5px;line-height:18.5px;font-weight:400;color:#1d2a33;">13:35</div><div class="abs" style="left:1076.25px;top:1208px;width:1.5px;height:9px;background:#2f3a40"></div><div class="t" style="left:1053.83px;top:1219.04px;font-size:18.5px;line-height:18.5px;font-weight:400;color:#1d2a33;">13:40</div><div class="abs" style="left:1200.95px;top:1208px;width:1.5px;height:9px;background:#2f3a40"></div><div class="t" style="left:1178.53px;top:1219.04px;font-size:18.5px;line-height:18.5px;font-weight:400;color:#1d2a33;">13:45</div><div class="abs" style="left:1325.65px;top:1208px;width:1.5px;height:9px;background:#2f3a40"></div><div class="t" style="left:1303.23px;top:1219.04px;font-size:18.5px;line-height:18.5px;font-weight:400;color:#1d2a33;">13:50</div><div class="abs" style="left:1450.35px;top:1208px;width:1.5px;height:9px;background:#2f3a40"></div><div class="t" style="left:1427.93px;top:1219.04px;font-size:18.5px;line-height:18.5px;font-weight:400;color:#1d2a33;">13:55</div><div class="abs" style="left:1575.05px;top:1208px;width:1.5px;height:9px;background:#2f3a40"></div><div class="t" style="left:1552.63px;top:1219.04px;font-size:18.5px;line-height:18.5px;font-weight:400;color:#1d2a33;">14:00</div><div class="abs" style="left:1699.75px;top:1208px;width:1.5px;height:9px;background:#2f3a40"></div><div class="t" style="left:1677.33px;top:1219.04px;font-size:18.5px;line-height:18.5px;font-weight:400;color:#1d2a33;">14:05</div><div class="abs" style="left:1824.45px;top:1208px;width:1.5px;height:9px;background:#2f3a40"></div><div class="t" style="left:1802.03px;top:1219.04px;font-size:18.5px;line-height:18.5px;font-weight:400;color:#1d2a33;">14:10</div><div class="abs" style="left:388.1px;top:1268px;width:19.6px;height:19.6px;border-radius:3px;background:#92c5f8"></div><div class="t" style="left:419.80px;top:1268.79px;font-size:19.5px;line-height:19.5px;font-weight:400;color:#1d2a33;">Hits</div><div class="abs" style="left:484.1px;top:1268px;width:19.6px;height:19.6px;border-radius:3px;background:#e53d21"></div><div class="t" style="left:515.50px;top:1268.79px;font-size:19.5px;line-height:19.5px;font-weight:400;color:#1d2a33;">Errors</div><div class="t" style="left:1994.70px;top:877.68px;font-size:24px;line-height:24px;font-weight:400;color:#1d2a33;transform:scaleX(1.0021);">Latency</div><svg class="abs" style="left:2107px;top:885.4px" width="17" height="10"><path d="M0 0h17L8.5 10z" fill="#5f6b72"/></svg><div class="abs" style="left:2153.6px;top:871.3px;width:35.4px;height:35.5px;background:#ee0a8c;border-radius:6px"></div><svg class="abs" style="left:2159.6px;top:878px" width="24" height="23" viewBox="0 0 24 23"><path fill="#fff" d="M5.5 0h4.2v3.5H5.5zM14.2 0h4.2v3.5h-4.2zM3.6 3.8h16.7l2.6 9.7.3 8.6H13.1v-9H9.2v9H0l.3-8.6z"/></svg><div class="abs" style="left:1970.6px;top:921.5px;width:1587px;height:1.6px;background:#e1e4e6"></div><svg class="abs" style="left:3409.90px;top:873.90px" width="32" height="30" viewBox="0 0 32 30"><path d="M16.42 1.47A13.6 13.6 0 0 0 2.67 9.25 M2.67 20.75A13.6 13.6 0 0 0 16.42 28.53 M15.50 7.82A7.2 7.2 0 0 0 8.64 11.62 M8.64 18.38A7.2 7.2 0 0 0 15.50 22.18 M21.15 10.53A7.6 7.6 0 0 1 21.15 19.47 M26.57 7.48A13.8 13.8 0 0 1 26.57 22.52" fill="none" stroke="#66727a" stroke-width="3" /><circle cx="15" cy="15" r="2.1" fill="#66727a"/></svg><svg class="abs" style="left:3461px;top:874px" width="30" height="28" viewBox="0 0 30 28"><g fill="none" stroke="#66727a" stroke-width="2.4"><path d="M4.2 16v9.8h20.6V16M14.5 19V3.2M7.6 10.2l6.9-7 6.9 7"/></g></svg>
<svg class="abs" style="left:3514px;top:877px" width="25" height="25" viewBox="0 0 25 25"><g fill="none" stroke="#66727a" stroke-width="2.4"><path d="M2 9V2h7M2 2l7 7M23 9V2h-7M23 2l-7 7M2 16v7h7M2 23l7-7M23 16v7h-7M23 23l-7-7"/></g></svg><div class="abs" style="left:2052.2px;top:951.5px;width:1497.6px;height:256.5px;background:#fcf5f9"></div><div class="abs" style="left:2052.2px;top:1143.10px;width:1497.6px;height:1.3px;background:#e4e1e4"></div><div class="abs" style="left:2052.2px;top:1079.00px;width:1497.6px;height:1.3px;background:#e4e1e4"></div><div class="abs" style="left:2052.2px;top:1014.90px;width:1497.6px;height:1.3px;background:#e4e1e4"></div><div class="t" style="left:2036.03px;top:1198.94px;font-size:18.5px;line-height:18.5px;font-weight:400;color:#1d2a33;">0</div><div class="t" style="left:2025.76px;top:1134.84px;font-size:18.5px;line-height:18.5px;font-weight:400;color:#1d2a33;">10</div><div class="t" style="left:2025.76px;top:1070.74px;font-size:18.5px;line-height:18.5px;font-weight:400;color:#1d2a33;">20</div><div class="t" style="left:2025.76px;top:1006.64px;font-size:18.5px;line-height:18.5px;font-weight:400;color:#1d2a33;">30</div><div class="t" style="left:2025.76px;top:942.54px;font-size:18.5px;line-height:18.5px;font-weight:400;color:#1d2a33;">40</div><svg class="abs" style="left:2052px;top:949px" width="1500" height="5"><path d="M0 2.5H1498" stroke="#e8318a" stroke-width="2.2" stroke-dasharray="7 5"/></svg><div class="abs" style="left:2052.2px;top:1208px;width:1497.6px;height:5px;background:#f7a9cb"></div><div class="t" style="left:2686.00px;top:966.52px;font-size:21px;line-height:21px;font-weight:400;color:#e01f84;transform:scaleX(1.0620);">Apr 5, 13:13 - Ongoing</div><div class="t" style="left:1949.06px;top:1087.25px;width:75.89px;font-size:19.5px;line-height:19.5px;color:#8d959a;text-align:center;transform-origin:50% 50%;transform:rotate(-90deg) scaleX(1.022)">Seconds</div><svg class="abs" style="left:0;top:0" width="3800" height="1930"><defs><clipPath id="c2"><rect x="2052" y="940" width="1498" height="272"/></clipPath></defs><g clip-path="url(#c2)" fill="none" stroke-width="2.9" stroke-linejoin="round"><path d="M2056.6 1205.0 L2073.8 1202.6 L2091.0 1206.0 L2108.2 1206.0 L2132.3 1203.3 L2147.8 1206.0 L2190.8 1205.3 L2225.2 1205.0 L2259.6 1204.3 L2294.0 1206.0 L2328.4 1205.0 L2362.8 1206.0 L2397.2 1206.0 L2417.8 1205.0 L2431.6 1201.6 L2448.8 1203.6 L2466.0 1203.6 L2483.2 1205.0 L2500.4 1202.9 L2517.6 1203.6 L2534.8 1205.0 L2569.2 1204.3 L2586.4 1202.6 L2603.6 1202.9 L2623.2 1201.6 L2638.0 1203.3 L2655.2 1201.9 L2672.4 1204.3 L2689.6 1205.0 L2706.8 1204.3 L2724.0 1205.0 L2741.2 1204.3 L2758.4 1202.6 L2784.4 1202.6 L2805.0 1200.9 L2818.8 1201.6 L2836.0 1202.6 L2847.0 1201.6 L2863.5 1203.6 L2887.6 1204.3 L2922.0 1205.0 L2956.4 1205.3 L2990.8 1204.3 L3025.2 1203.6 L3059.6 1203.3 L3094.0 1202.6 L3128.4 1203.6 L3162.8 1205.0 L3197.2 1205.0 L3231.6 1205.3 L3266.0 1205.3 L3300.4 1204.3 L3334.8 1205.3 L3369.2 1203.6 L3386.4 1200.9 L3403.6 1206.0 L3438.0 1203.6 L3455.2 1205.3 L3472.4 1206.0 L3506.8 1204.3 L3524.0 1206.0 L3548.1 1206.0" stroke="#3a9ae8"/><path d="M2056.6 1199.2 L2065.2 1192.3 L2073.8 1163.0 L2082.4 1163.0 L2091.0 1170.6 L2098.6 1199.2 L2108.2 1199.2 L2116.8 1199.2 L2123.7 1190.6 L2132.3 1163.7 L2139.9 1165.8 L2147.8 1192.3 L2156.4 1199.2 L2165.0 1200.2 L2173.6 1199.2 L2182.2 1194.0 L2190.8 1168.2 L2199.4 1166.5 L2208.0 1187.1 L2216.6 1196.7 L2225.2 1198.1 L2233.8 1198.1 L2242.4 1195.7 L2251.0 1169.9 L2259.6 1166.5 L2268.2 1171.6 L2276.8 1195.7 L2285.4 1200.2 L2294.0 1198.1 L2302.6 1195.7 L2311.2 1171.6 L2319.8 1168.2 L2328.4 1173.4 L2337.0 1196.7 L2345.6 1198.1 L2354.2 1196.7 L2366.2 1173.4 L2374.8 1169.9 L2383.4 1173.4 L2392.0 1197.4 L2400.6 1199.2 L2409.2 1198.1 L2417.8 1194.7 L2426.4 1175.1 L2431.6 1157.9 L2439.2 1158.9 L2447.8 1187.1 L2455.7 1188.8 L2464.3 1185.4 L2472.9 1195.7 L2481.5 1194.0 L2490.1 1188.8 L2498.7 1168.2 L2507.3 1166.5 L2514.2 1164.8 L2522.8 1166.5 L2531.4 1195.7 L2540.0 1196.7 L2548.6 1197.4 L2557.2 1196.7 L2565.8 1195.7 L2574.4 1192.3 L2581.2 1171.6 L2589.8 1161.3 L2598.4 1163.0 L2607.0 1168.2 L2615.6 1179.5 L2623.2 1166.5 L2631.1 1188.8 L2638.0 1194.0 L2646.6 1190.6 L2655.9 1187.1 L2664.5 1192.3 L2672.4 1197.4 L2681.0 1199.2 L2689.6 1198.1 L2698.2 1197.4 L2706.8 1196.7 L2714.4 1195.7 L2724.0 1196.7 L2730.9 1198.1 L2739.5 1195.7 L2748.1 1192.3 L2756.7 1194.0 L2763.6 1183.7 L2772.2 1183.0 L2781.0 1183.0 L2789.6 1188.8 L2797.5 1190.6 L2805.0 1171.6 L2813.6 1172.7 L2822.2 1188.8 L2830.8 1194.0 L2838.8 1195.0 L2847.0 1183.7 L2855.6 1195.0 L2863.5 1199.2 L2872.1 1200.2 L2887.6 1200.9 L2904.8 1200.2 L2922.0 1199.2 L2930.6 1196.7 L2939.2 1195.7 L2947.8 1195.0 L2956.4 1195.7 L2965.0 1196.7 L2973.6 1199.2 L2981.2 1200.2 L3008.0 1200.9 L3042.4 1200.2 L3076.8 1200.2 L3111.2 1199.2 L3128.4 1199.2 L3145.6 1200.2 L3162.8 1200.2 L3180.0 1199.2 L3197.2 1196.4 L3205.8 1197.4 L3214.4 1198.1 L3231.6 1199.2 L3248.8 1198.1 L3266.0 1199.2 L3283.2 1196.7 L3300.4 1196.7 L3314.2 1195.7 L3331.4 1198.1 L3348.6 1200.2 L3365.8 1199.2 L3372.6 1198.1 L3379.5 1164.8 L3388.1 1161.3 L3396.7 1163.0 L3405.3 1190.6 L3413.9 1200.9 L3422.5 1198.1 L3431.1 1197.4 L3439.7 1169.9 L3448.3 1163.0 L3456.9 1164.8 L3465.5 1168.2 L3474.1 1195.7 L3481.0 1197.4 L3489.6 1197.4 L3498.2 1194.0 L3506.8 1166.5 L3515.4 1163.7 L3524.0 1164.8 L3532.6 1195.7 L3541.2 1199.2 L3548.1 1199.2" stroke="#5b4cbd"/><path d="M2056.6 1188.8 L2065.2 1159.6 L2073.8 1155.5 L2082.4 1154.4 L2091.0 1155.5 L2098.6 1163.0 L2108.2 1185.4 L2116.8 1179.5 L2123.7 1159.6 L2132.3 1156.2 L2139.9 1155.5 L2147.8 1157.2 L2156.4 1159.6 L2165.0 1183.7 L2173.6 1169.9 L2182.2 1159.6 L2190.8 1156.2 L2199.4 1155.5 L2208.0 1156.2 L2216.6 1161.3 L2225.2 1169.2 L2233.8 1169.2 L2242.4 1161.3 L2251.0 1157.2 L2259.6 1156.2 L2268.2 1157.9 L2276.8 1161.3 L2285.4 1169.9 L2294.0 1169.2 L2302.6 1161.3 L2311.2 1157.9 L2319.8 1157.2 L2328.4 1158.6 L2337.0 1163.0 L2349.0 1167.2 L2357.6 1163.0 L2366.2 1159.6 L2374.8 1157.9 L2383.4 1158.6 L2392.0 1163.0 L2400.6 1168.2 L2409.2 1168.2 L2417.8 1159.6 L2426.4 1152.7 L2431.6 1135.5 L2439.2 1126.2 L2447.8 1154.4 L2455.7 1151.0 L2464.3 1148.6 L2472.9 1163.7 L2481.5 1163.0 L2490.1 1157.9 L2498.7 1154.4 L2507.3 1153.4 L2514.2 1149.3 L2522.8 1145.8 L2531.4 1161.3 L2540.0 1159.6 L2548.6 1171.6 L2557.2 1172.7 L2565.8 1166.5 L2574.4 1157.9 L2581.2 1144.1 L2589.8 1133.8 L2598.4 1140.7 L2607.0 1142.4 L2615.6 1141.7 L2623.2 1015.1 L2631.1 1063.3 L2638.0 1175.1 L2646.6 1169.9 L2655.9 1144.1 L2664.5 1159.6 L2672.4 1185.4 L2681.0 1190.6 L2689.6 1188.8 L2698.2 1188.8 L2706.8 1185.4 L2714.4 1180.2 L2724.0 1185.4 L2730.9 1189.9 L2739.5 1190.6 L2748.1 1178.5 L2756.7 1171.6 L2763.6 1176.8 L2772.2 1152.7 L2781.0 1118.3 L2789.6 1145.8 L2797.5 1165.8 L2805.0 1090.8 L2813.6 1015.1 L2822.2 1152.7 L2830.8 1164.8 L2838.8 1174.4 L2847.0 1137.2 L2855.6 1156.2 L2863.5 1190.6 L2872.1 1192.3 L2880.7 1190.6 L2889.3 1191.2 L2897.9 1190.6 L2906.5 1189.9 L2913.4 1183.7 L2922.0 1172.7 L2930.6 1166.5 L2939.2 1161.3 L2947.8 1159.6 L2956.4 1159.6 L2965.0 1163.0 L2973.6 1171.6 L2981.2 1185.4 L2990.8 1190.6 L2999.4 1192.3 L3008.0 1192.3 L3016.6 1192.3 L3025.2 1192.3 L3042.4 1192.3 L3059.6 1192.3 L3076.8 1192.3 L3094.0 1192.3 L3111.2 1192.3 L3126.7 1190.6 L3135.3 1188.8 L3143.9 1190.6 L3154.2 1194.0 L3162.8 1192.3 L3171.4 1185.4 L3180.0 1173.4 L3188.6 1164.8 L3197.2 1161.3 L3205.8 1161.3 L3214.4 1161.3 L3223.0 1163.0 L3231.6 1165.8 L3238.5 1166.5 L3247.1 1155.5 L3255.7 1185.4 L3264.3 1188.8 L3272.9 1187.1 L3279.8 1185.4 L3288.4 1169.9 L3297.0 1168.2 L3305.6 1168.2 L3314.2 1164.8 L3322.8 1171.6 L3331.4 1185.4 L3340.0 1188.8 L3348.6 1190.6 L3355.4 1185.4 L3364.0 1188.8 L3372.6 1182.0 L3379.5 1156.2 L3388.1 1152.7 L3396.7 1154.4 L3405.3 1157.9 L3413.9 1175.1 L3422.5 1186.4 L3431.1 1169.9 L3439.7 1157.2 L3448.3 1154.4 L3456.9 1155.5 L3465.5 1157.2 L3474.1 1161.3 L3481.0 1180.2 L3489.6 1175.1 L3498.2 1159.6 L3506.8 1155.5 L3515.4 1154.4 L3524.0 1155.5 L3532.6 1159.6 L3541.2 1171.6 L3548.1 1183.7" stroke="#e9bf2e"/><path d="M2056.6 1163.7 L2065.2 1152.7 L2073.8 1151.0 L2082.4 1152.0 L2091.0 1152.7 L2098.6 1156.2 L2108.2 1161.3 L2116.8 1159.6 L2123.7 1154.4 L2132.3 1152.7 L2139.9 1153.4 L2147.8 1154.4 L2156.4 1157.9 L2165.0 1163.0 L2173.6 1158.9 L2182.2 1154.4 L2190.8 1152.7 L2199.4 1152.7 L2208.0 1154.4 L2216.6 1157.2 L2225.2 1158.9 L2233.8 1157.9 L2242.4 1154.4 L2251.0 1152.7 L2259.6 1153.4 L2268.2 1155.5 L2276.8 1159.6 L2285.4 1159.6 L2294.0 1156.2 L2302.6 1154.4 L2311.2 1153.7 L2319.8 1153.7 L2328.4 1154.4 L2337.0 1157.2 L2349.0 1159.6 L2357.6 1155.5 L2366.2 1154.4 L2374.8 1153.7 L2383.4 1154.4 L2392.0 1157.2 L2400.6 1158.9 L2409.2 1157.9 L2417.8 1154.4 L2423.0 1149.3 L2431.6 1090.8 L2439.2 1003.1 L2447.8 1142.4 L2455.7 1080.5 L2464.3 1094.9 L2472.9 1149.3 L2481.5 1154.4 L2490.1 1151.0 L2498.7 1140.0 L2507.3 1145.8 L2514.2 1137.2 L2522.8 1011.7 L2531.4 1152.7 L2540.0 1145.8 L2548.6 1155.5 L2557.2 1159.6 L2565.8 1157.2 L2574.4 1152.7 L2581.2 1125.2 L2589.8 1015.1 L2598.4 1065.0 L2607.0 1097.7 L2615.6 1104.6 L2623.2 992.8 L2631.1 1010.0 L2638.0 1156.2 L2646.6 1152.7 L2655.9 999.6 L2664.5 1056.4 L2672.4 1169.9 L2681.0 1178.5 L2689.6 1176.1 L2698.2 1176.8 L2706.8 1169.9 L2714.4 1161.3 L2724.0 1169.9 L2730.9 1183.0 L2739.5 1180.2 L2748.1 1161.3 L2756.7 1108.0 L2763.6 1161.3 L2772.2 1011.7 L2781.0 1006.5 L2789.6 1034.0 L2797.5 1149.3 L2805.0 999.6 L2813.6 999.6 L2822.2 1015.1 L2830.8 1011.7 L2838.8 1152.7 L2847.0 1008.2 L2855.6 1011.7 L2863.5 1185.4 L2872.1 1185.4 L2880.7 1182.0 L2889.3 1182.0 L2897.9 1178.5 L2906.5 1173.4 L2913.4 1163.0 L2922.0 1159.6 L2930.6 1157.9 L2939.2 1154.4 L2947.8 1155.5 L2956.4 1154.4 L2965.0 1156.2 L2973.6 1159.6 L2981.2 1164.8 L2990.8 1183.7 L2999.4 1187.1 L3008.0 1187.1 L3016.6 1187.1 L3023.5 1185.4 L3032.1 1187.1 L3040.7 1188.8 L3049.3 1188.8 L3057.9 1188.8 L3066.5 1188.8 L3075.1 1187.1 L3083.7 1187.1 L3092.3 1188.1 L3100.9 1187.1 L3109.5 1187.1 L3118.1 1185.4 L3126.7 1182.0 L3135.3 1179.5 L3143.9 1185.4 L3154.2 1187.1 L3162.8 1182.0 L3171.4 1163.0 L3180.0 1159.6 L3188.6 1157.2 L3197.2 1155.1 L3205.8 1155.1 L3214.4 1155.1 L3223.0 1155.5 L3231.6 1155.1 L3238.5 1152.7 L3247.1 1094.2 L3255.7 1157.9 L3264.3 1179.5 L3272.9 1175.1 L3281.5 1169.9 L3288.4 1158.9 L3297.0 1157.2 L3305.6 1157.2 L3314.2 1157.2 L3322.8 1158.6 L3331.4 1164.8 L3340.0 1168.2 L3348.6 1171.6 L3355.4 1164.8 L3364.0 1166.5 L3372.6 1164.8 L3379.5 1152.7 L3388.1 1149.3 L3396.7 1150.3 L3405.3 1152.7 L3413.9 1157.9 L3422.5 1163.7 L3431.1 1157.9 L3439.7 1153.4 L3448.3 1152.0 L3456.9 1152.7 L3465.5 1154.4 L3474.1 1157.2 L3481.0 1161.3 L3489.6 1162.3 L3498.2 1154.4 L3506.8 1152.0 L3515.4 1152.0 L3524.0 1152.7 L3532.6 1157.2 L3541.2 1161.3 L3549.8 1163.7" stroke="#7ea8ee"/></g></svg><div class="abs" style="left:2098.85px;top:1208px;width:1.5px;height:9px;background:#2f3a40"></div><div class="t" style="left:2076.43px;top:1219.04px;font-size:18.5px;line-height:18.5px;font-weight:400;color:#1d2a33;">13:15</div><div class="abs" style="left:2223.60px;top:1208px;width:1.5px;height:9px;background:#2f3a40"></div><div class="t" style="left:2201.18px;top:1219.04px;font-size:18.5px;line-height:18.5px;font-weight:400;color:#1d2a33;">13:20</div><div class="abs" style="left:2348.35px;top:1208px;width:1.5px;height:9px;background:#2f3a40"></div><div class="t" style="left:2325.93px;top:1219.04px;font-size:18.5px;line-height:18.5px;font-weight:400;color:#1d2a33;">13:25</div><div class="abs" style="left:2473.10px;top:1208px;width:1.5px;height:9px;background:#2f3a40"></div><div class="t" style="left:2450.68px;top:1219.04px;font-size:18.5px;line-height:18.5px;font-weight:400;color:#1d2a33;">13:30</div><div class="abs" style="left:2597.85px;top:1208px;width:1.5px;height:9px;background:#2f3a40"></div><div class="t" style="left:2575.43px;top:1219.04px;font-size:18.5px;line-height:18.5px;font-weight:400;color:#1d2a33;">13:35</div><div class="abs" style="left:2722.60px;top:1208px;width:1.5px;height:9px;background:#2f3a40"></div><div class="t" style="left:2700.18px;top:1219.04px;font-size:18.5px;line-height:18.5px;font-weight:400;color:#1d2a33;">13:40</div><div class="abs" style="left:2847.35px;top:1208px;width:1.5px;height:9px;background:#2f3a40"></div><div class="t" style="left:2824.93px;top:1219.04px;font-size:18.5px;line-height:18.5px;font-weight:400;color:#1d2a33;">13:45</div><div class="abs" style="left:2972.10px;top:1208px;width:1.5px;height:9px;background:#2f3a40"></div><div class="t" style="left:2949.68px;top:1219.04px;font-size:18.5px;line-height:18.5px;font-weight:400;color:#1d2a33;">13:50</div><div class="abs" style="left:3096.85px;top:1208px;width:1.5px;height:9px;background:#2f3a40"></div><div class="t" style="left:3074.43px;top:1219.04px;font-size:18.5px;line-height:18.5px;font-weight:400;color:#1d2a33;">13:55</div><div class="abs" style="left:3221.60px;top:1208px;width:1.5px;height:9px;background:#2f3a40"></div><div class="t" style="left:3199.18px;top:1219.04px;font-size:18.5px;line-height:18.5px;font-weight:400;color:#1d2a33;">14:00</div><div class="abs" style="left:3346.35px;top:1208px;width:1.5px;height:9px;background:#2f3a40"></div><div class="t" style="left:3323.93px;top:1219.04px;font-size:18.5px;line-height:18.5px;font-weight:400;color:#1d2a33;">14:05</div><div class="abs" style="left:3471.10px;top:1208px;width:1.5px;height:9px;background:#2f3a40"></div><div class="t" style="left:3448.68px;top:1219.04px;font-size:18.5px;line-height:18.5px;font-weight:400;color:#1d2a33;">14:10</div><div class="abs" style="left:2034.3px;top:1268px;width:19.6px;height:19.6px;border-radius:3px;background:#3a9ae8"></div><div class="t" style="left:2065.20px;top:1268.79px;font-size:19.5px;line-height:19.5px;font-weight:400;color:#1d2a33;">p50</div><div class="abs" style="left:2128.2px;top:1268px;width:19.6px;height:19.6px;border-radius:3px;background:#5b4cbd"></div><div class="t" style="left:2159.00px;top:1268.79px;font-size:19.5px;line-height:19.5px;font-weight:400;color:#1d2a33;">p75</div><div class="abs" style="left:2221.8px;top:1268px;width:19.6px;height:19.6px;border-radius:3px;background:#e9bf2e"></div><div class="t" style="left:2252.70px;top:1268.79px;font-size:19.5px;line-height:19.5px;font-weight:400;color:#1d2a33;">p90</div><div class="abs" style="left:2315.3px;top:1268px;width:19.6px;height:19.6px;border-radius:3px;background:#7ea8ee"></div><div class="t" style="left:2346.30px;top:1268.79px;font-size:19.5px;line-height:19.5px;font-weight:400;color:#1d2a33;">p95</div><div class="abs" style="left:2409.2px;top:1268px;width:19.6px;height:19.6px;border-radius:3px;border:2px solid #a99af0;background:#fff"></div><div class="t" style="left:2440.20px;top:1268.79px;font-size:19.5px;line-height:19.5px;font-weight:400;color:#1d2a33;">p99</div><div class="abs" style="left:2503.8px;top:1268px;width:19.6px;height:19.6px;border-radius:3px;border:2px solid #f3d98e;background:#fff"></div><div class="t" style="left:2534.80px;top:1268.79px;font-size:19.5px;line-height:19.5px;font-weight:400;color:#1d2a33;">Max</div><div class="t" style="left:349.20px;top:1367.88px;font-size:24px;line-height:24px;font-weight:400;color:#1d2a33;">Errors</div><svg class="abs" style="left:443.9px;top:1375.6px" width="17" height="10"><path d="M0 0h17L8.5 10z" fill="#5f6b72"/></svg><div class="t" style="left:490.30px;top:1367.88px;font-size:24px;line-height:24px;font-weight:400;color:#6b767c;transform:scaleX(1.0220);">77.6k total (21.5 req/s)</div><div class="abs" style="left:324px;top:1411.5px;width:1589px;height:1.6px;background:#e1e4e6"></div><svg class="abs" style="left:1763.90px;top:1363.90px" width="32" height="30" viewBox="0 0 32 30"><path d="M16.42 1.47A13.6 13.6 0 0 0 2.67 9.25 M2.67 20.75A13.6 13.6 0 0 0 16.42 28.53 M15.50 7.82A7.2 7.2 0 0 0 8.64 11.62 M8.64 18.38A7.2 7.2 0 0 0 15.50 22.18 M21.15 10.53A7.6 7.6 0 0 1 21.15 19.47 M26.57 7.48A13.8 13.8 0 0 1 26.57 22.52" fill="none" stroke="#66727a" stroke-width="3" /><circle cx="15" cy="15" r="2.1" fill="#66727a"/></svg><svg class="abs" style="left:1815px;top:1364px" width="30" height="28" viewBox="0 0 30 28"><g fill="none" stroke="#66727a" stroke-width="2.4"><path d="M4.2 16v9.8h20.6V16M14.5 19V3.2M7.6 10.2l6.9-7 6.9 7"/></g></svg>
<svg class="abs" style="left:1868px;top:1367px" width="25" height="25" viewBox="0 0 25 25"><g fill="none" stroke="#66727a" stroke-width="2.4"><path d="M2 9V2h7M2 2l7 7M23 9V2h-7M23 2l-7 7M2 16v7h7M2 23l7-7M23 16v7h-7M23 23l-7-7"/></g></svg><div class="abs" style="left:406.7px;top:1633.20px;width:1497px;height:1.2px;background:#e4e6e8"></div><div class="abs" style="left:406.7px;top:1569.10px;width:1497px;height:1.2px;background:#e4e6e8"></div><div class="abs" style="left:406.7px;top:1505.00px;width:1497px;height:1.2px;background:#e4e6e8"></div><div class="abs" style="left:406.7px;top:1440.90px;width:1497px;height:1.2px;background:#e4e6e8"></div><div class="t" style="left:380.19px;top:1689.04px;font-size:18.5px;line-height:18.5px;font-weight:400;color:#1d2a33;">0k</div><div class="t" style="left:380.19px;top:1624.94px;font-size:18.5px;line-height:18.5px;font-weight:400;color:#1d2a33;">1k</div><div class="t" style="left:380.19px;top:1560.84px;font-size:18.5px;line-height:18.5px;font-weight:400;color:#1d2a33;">2k</div><div class="t" style="left:380.19px;top:1496.74px;font-size:18.5px;line-height:18.5px;font-weight:400;color:#1d2a33;">3k</div><div class="t" style="left:380.19px;top:1432.64px;font-size:18.5px;line-height:18.5px;font-weight:400;color:#1d2a33;">4k</div><svg class="abs" style="left:0;top:0" width="3800" height="1930"><defs><clipPath id="c3"><rect x="406" y="1400" width="1498" height="310"/></clipPath></defs><g clip-path="url(#c3)"><rect x="427.70" y="1665.21" width="19.6" height="32.69" fill="#fbb04a"/><rect x="427.70" y="1691.71" width="19.6" height="6.19" fill="#f8893a"/><rect x="427.70" y="1694.46" width="19.6" height="3.44" fill="#ea4024"/><rect x="452.64" y="1647.26" width="19.6" height="50.64" fill="#fbb04a"/><rect x="452.64" y="1688.61" width="19.6" height="9.29" fill="#f8893a"/><rect x="452.64" y="1691.71" width="19.6" height="6.19" fill="#ea4024"/><rect x="477.58" y="1678.67" width="19.6" height="19.23" fill="#fbb04a"/><rect x="477.58" y="1693.77" width="19.6" height="4.13" fill="#ea4024"/><rect x="502.52" y="1660.08" width="19.6" height="37.82" fill="#fbb04a"/><rect x="502.52" y="1688.61" width="19.6" height="9.29" fill="#f8893a"/><rect x="502.52" y="1691.71" width="19.6" height="6.19" fill="#ea4024"/><rect x="527.46" y="1676.11" width="19.6" height="21.79" fill="#fbb04a"/><rect x="527.46" y="1693.77" width="19.6" height="4.13" fill="#ea4024"/><rect x="552.40" y="1670.98" width="19.6" height="26.92" fill="#fbb04a"/><rect x="552.40" y="1690.33" width="19.6" height="7.57" fill="#f8893a"/><rect x="552.40" y="1693.77" width="19.6" height="4.13" fill="#ea4024"/><rect x="577.34" y="1663.93" width="19.6" height="33.97" fill="#fbb04a"/><rect x="577.34" y="1695.15" width="19.6" height="2.75" fill="#ea4024"/><rect x="602.28" y="1678.67" width="19.6" height="19.23" fill="#fbb04a"/><rect x="602.28" y="1695.15" width="19.6" height="2.75" fill="#ea4024"/><rect x="627.22" y="1665.21" width="19.6" height="32.69" fill="#fbb04a"/><rect x="627.22" y="1690.33" width="19.6" height="7.57" fill="#f8893a"/><rect x="627.22" y="1693.77" width="19.6" height="4.13" fill="#ea4024"/><rect x="652.16" y="1676.11" width="19.6" height="21.79" fill="#fbb04a"/><rect x="652.16" y="1695.15" width="19.6" height="2.75" fill="#ea4024"/><rect x="677.10" y="1662.64" width="19.6" height="35.26" fill="#fbb04a"/><rect x="677.10" y="1690.33" width="19.6" height="7.57" fill="#f8893a"/><rect x="677.10" y="1693.77" width="19.6" height="4.13" fill="#ea4024"/><rect x="702.04" y="1674.18" width="19.6" height="23.72" fill="#fbb04a"/><rect x="702.04" y="1693.08" width="19.6" height="4.82" fill="#ea4024"/><rect x="726.98" y="1602.39" width="19.6" height="95.51" fill="#fbb04a"/><rect x="726.98" y="1622.26" width="19.6" height="75.64" fill="#ea4024"/><rect x="726.98" y="1629.31" width="19.6" height="68.59" fill="#c2102c"/><rect x="751.92" y="1568.42" width="19.6" height="129.48" fill="#fbb04a"/><rect x="751.92" y="1591.49" width="19.6" height="5.13" fill="#f8893a"/><rect x="751.92" y="1594.06" width="19.6" height="103.84" fill="#ea4024"/><rect x="751.92" y="1596.62" width="19.6" height="101.28" fill="#c2102c"/><rect x="776.86" y="1626.11" width="19.6" height="71.79" fill="#fbb04a"/><rect x="776.86" y="1693.77" width="19.6" height="4.13" fill="#ea4024"/><rect x="801.80" y="1612.65" width="19.6" height="85.25" fill="#fbb04a"/><rect x="801.80" y="1693.08" width="19.6" height="4.82" fill="#ea4024"/><rect x="826.74" y="1656.24" width="19.6" height="41.66" fill="#fbb04a"/><rect x="826.74" y="1693.77" width="19.6" height="4.13" fill="#ea4024"/><rect x="851.68" y="1665.21" width="19.6" height="32.69" fill="#fbb04a"/><rect x="851.68" y="1695.15" width="19.6" height="2.75" fill="#ea4024"/><rect x="876.62" y="1620.98" width="19.6" height="76.92" fill="#fbb04a"/><rect x="876.62" y="1688.61" width="19.6" height="9.29" fill="#f8893a"/><rect x="876.62" y="1691.71" width="19.6" height="6.19" fill="#ea4024"/><rect x="901.56" y="1658.80" width="19.6" height="39.10" fill="#fbb04a"/><rect x="901.56" y="1695.15" width="19.6" height="2.75" fill="#ea4024"/><rect x="926.50" y="1640.21" width="19.6" height="57.69" fill="#fbb04a"/><rect x="926.50" y="1696.18" width="19.6" height="1.72" fill="#ea4024"/><rect x="951.44" y="1620.98" width="19.6" height="76.92" fill="#fbb04a"/><rect x="951.44" y="1696.18" width="19.6" height="1.72" fill="#ea4024"/><rect x="976.38" y="1546.62" width="19.6" height="151.28" fill="#fbb04a"/><rect x="976.38" y="1696.18" width="19.6" height="1.72" fill="#ea4024"/><rect x="1001.32" y="1578.67" width="19.6" height="119.23" fill="#fbb04a"/><rect x="1001.32" y="1696.18" width="19.6" height="1.72" fill="#ea4024"/><rect x="1026.26" y="1611.37" width="19.6" height="86.53" fill="#fbb04a"/><rect x="1026.26" y="1696.18" width="19.6" height="1.72" fill="#ea4024"/><rect x="1051.20" y="1588.29" width="19.6" height="109.61" fill="#fbb04a"/><rect x="1051.20" y="1696.18" width="19.6" height="1.72" fill="#ea4024"/><rect x="1076.14" y="1582.52" width="19.6" height="115.38" fill="#fbb04a"/><rect x="1076.14" y="1696.18" width="19.6" height="1.72" fill="#ea4024"/><rect x="1101.08" y="1578.67" width="19.6" height="119.23" fill="#fbb04a"/><rect x="1101.08" y="1696.18" width="19.6" height="1.72" fill="#ea4024"/><rect x="1126.02" y="1537.65" width="19.6" height="160.25" fill="#fbb04a"/><rect x="1126.02" y="1696.18" width="19.6" height="1.72" fill="#ea4024"/><rect x="1150.96" y="1533.80" width="19.6" height="164.10" fill="#fbb04a"/><rect x="1150.96" y="1696.18" width="19.6" height="1.72" fill="#ea4024"/><rect x="1175.90" y="1548.55" width="19.6" height="149.35" fill="#fbb04a"/><rect x="1175.90" y="1694.46" width="19.6" height="3.44" fill="#f8893a"/><rect x="1175.90" y="1696.18" width="19.6" height="1.72" fill="#ea4024"/><rect x="1200.84" y="1508.81" width="19.6" height="189.09" fill="#fbb04a"/><rect x="1200.84" y="1689.99" width="19.6" height="7.91" fill="#f8893a"/><rect x="1200.84" y="1692.74" width="19.6" height="5.16" fill="#ea4024"/><rect x="1225.78" y="1528.68" width="19.6" height="169.22" fill="#fbb04a"/><rect x="1225.78" y="1690.33" width="19.6" height="7.57" fill="#f8893a"/><rect x="1225.78" y="1693.77" width="19.6" height="4.13" fill="#ea4024"/><rect x="1250.72" y="1546.62" width="19.6" height="151.28" fill="#fbb04a"/><rect x="1250.72" y="1690.33" width="19.6" height="7.57" fill="#f8893a"/><rect x="1250.72" y="1693.77" width="19.6" height="4.13" fill="#ea4024"/><rect x="1275.66" y="1571.62" width="19.6" height="126.28" fill="#fbb04a"/><rect x="1275.66" y="1696.18" width="19.6" height="1.72" fill="#ea4024"/><rect x="1300.60" y="1604.31" width="19.6" height="93.59" fill="#fbb04a"/><rect x="1300.60" y="1696.18" width="19.6" height="1.72" fill="#ea4024"/><rect x="1325.54" y="1556.24" width="19.6" height="141.66" fill="#fbb04a"/><rect x="1325.54" y="1694.46" width="19.6" height="3.44" fill="#f8893a"/><rect x="1325.54" y="1696.18" width="19.6" height="1.72" fill="#ea4024"/><rect x="1350.48" y="1553.68" width="19.6" height="144.22" fill="#fbb04a"/><rect x="1350.48" y="1696.18" width="19.6" height="1.72" fill="#ea4024"/><rect x="1375.42" y="1533.80" width="19.6" height="164.10" fill="#fbb04a"/><rect x="1375.42" y="1696.18" width="19.6" height="1.72" fill="#ea4024"/><rect x="1400.36" y="1542.78" width="19.6" height="155.12" fill="#fbb04a"/><rect x="1400.36" y="1696.18" width="19.6" height="1.72" fill="#ea4024"/><rect x="1425.30" y="1542.78" width="19.6" height="155.12" fill="#fbb04a"/><rect x="1425.30" y="1696.18" width="19.6" height="1.72" fill="#ea4024"/><rect x="1450.24" y="1533.80" width="19.6" height="164.10" fill="#fbb04a"/><rect x="1450.24" y="1694.46" width="19.6" height="3.44" fill="#f8893a"/><rect x="1450.24" y="1696.18" width="19.6" height="1.72" fill="#ea4024"/><rect x="1475.18" y="1526.75" width="19.6" height="171.15" fill="#fbb04a"/><rect x="1475.18" y="1694.46" width="19.6" height="3.44" fill="#f8893a"/><rect x="1475.18" y="1696.18" width="19.6" height="1.72" fill="#ea4024"/><rect x="1500.12" y="1575.47" width="19.6" height="122.43" fill="#fbb04a"/><rect x="1500.12" y="1688.26" width="19.6" height="9.64" fill="#f8893a"/><rect x="1500.12" y="1693.77" width="19.6" height="4.13" fill="#ea4024"/><rect x="1525.06" y="1597.26" width="19.6" height="100.64" fill="#fbb04a"/><rect x="1525.06" y="1689.99" width="19.6" height="7.91" fill="#f8893a"/><rect x="1525.06" y="1692.39" width="19.6" height="5.51" fill="#ea4024"/><rect x="1550.00" y="1622.26" width="19.6" height="75.64" fill="#fbb04a"/><rect x="1550.00" y="1693.77" width="19.6" height="4.13" fill="#ea4024"/><rect x="1574.94" y="1658.80" width="19.6" height="39.10" fill="#fbb04a"/><rect x="1574.94" y="1693.77" width="19.6" height="4.13" fill="#ea4024"/><rect x="1599.88" y="1644.06" width="19.6" height="53.84" fill="#fbb04a"/><rect x="1599.88" y="1695.15" width="19.6" height="2.75" fill="#ea4024"/><rect x="1624.82" y="1660.08" width="19.6" height="37.82" fill="#fbb04a"/><rect x="1624.82" y="1696.18" width="19.6" height="1.72" fill="#ea4024"/><rect x="1649.76" y="1649.18" width="19.6" height="48.72" fill="#fbb04a"/><rect x="1649.76" y="1696.18" width="19.6" height="1.72" fill="#ea4024"/><rect x="1674.70" y="1651.11" width="19.6" height="46.79" fill="#fbb04a"/><rect x="1674.70" y="1691.71" width="19.6" height="6.19" fill="#f8893a"/><rect x="1674.70" y="1694.46" width="19.6" height="3.44" fill="#ea4024"/><rect x="1699.64" y="1622.26" width="19.6" height="75.64" fill="#fbb04a"/><rect x="1699.64" y="1684.82" width="19.6" height="13.08" fill="#f8893a"/><rect x="1699.64" y="1691.71" width="19.6" height="6.19" fill="#ea4024"/><rect x="1724.58" y="1683.16" width="19.6" height="14.74" fill="#fbb04a"/><rect x="1749.52" y="1632.52" width="19.6" height="65.38" fill="#fbb04a"/><rect x="1749.52" y="1686.89" width="19.6" height="11.01" fill="#f8893a"/><rect x="1749.52" y="1691.71" width="19.6" height="6.19" fill="#ea4024"/><rect x="1774.46" y="1654.95" width="19.6" height="42.95" fill="#fbb04a"/><rect x="1774.46" y="1696.18" width="19.6" height="1.72" fill="#ea4024"/><rect x="1799.40" y="1667.13" width="19.6" height="30.77" fill="#fbb04a"/><rect x="1799.40" y="1691.71" width="19.6" height="6.19" fill="#f8893a"/><rect x="1799.40" y="1694.46" width="19.6" height="3.44" fill="#ea4024"/><rect x="1824.34" y="1642.13" width="19.6" height="55.77" fill="#fbb04a"/><rect x="1824.34" y="1689.99" width="19.6" height="7.91" fill="#f8893a"/><rect x="1824.34" y="1693.77" width="19.6" height="4.13" fill="#ea4024"/><rect x="1849.28" y="1678.67" width="19.6" height="19.23" fill="#fbb04a"/><rect x="1849.28" y="1693.77" width="19.6" height="4.13" fill="#f8893a"/><rect x="1849.28" y="1695.15" width="19.6" height="2.75" fill="#ea4024"/><rect x="1874.22" y="1645.34" width="19.6" height="52.56" fill="#fbb04a"/><rect x="1874.22" y="1688.26" width="19.6" height="9.64" fill="#f8893a"/><rect x="1874.22" y="1691.71" width="19.6" height="6.19" fill="#ea4024"/><rect x="1899.16" y="1678.67" width="19.6" height="19.23" fill="#fbb04a"/><rect x="1899.16" y="1696.18" width="19.6" height="1.72" fill="#ea4024"/></g></svg><div class="abs" style="left:406.7px;top:1697.1px;width:1497px;height:1.8px;background:#8d959a"></div><div class="abs" style="left:452.75px;top:1698px;width:1.5px;height:9px;background:#2f3a40"></div><div class="t" style="left:430.33px;top:1709.04px;font-size:18.5px;line-height:18.5px;font-weight:400;color:#1d2a33;">13:15</div><div class="abs" style="left:577.45px;top:1698px;width:1.5px;height:9px;background:#2f3a40"></div><div class="t" style="left:555.03px;top:1709.04px;font-size:18.5px;line-height:18.5px;font-weight:400;color:#1d2a33;">13:20</div><div class="abs" style="left:702.15px;top:1698px;width:1.5px;height:9px;background:#2f3a40"></div><div class="t" style="left:679.73px;top:1709.04px;font-size:18.5px;line-height:18.5px;font-weight:400;color:#1d2a33;">13:25</div><div class="abs" style="left:826.85px;top:1698px;width:1.5px;height:9px;background:#2f3a40"></div><div class="t" style="left:804.43px;top:1709.04px;font-size:18.5px;line-height:18.5px;font-weight:400;color:#1d2a33;">13:30</div><div class="abs" style="left:951.55px;top:1698px;width:1.5px;height:9px;background:#2f3a40"></div><div class="t" style="left:929.13px;top:1709.04px;font-size:18.5px;line-height:18.5px;font-weight:400;color:#1d2a33;">13:35</div><div class="abs" style="left:1076.25px;top:1698px;width:1.5px;height:9px;background:#2f3a40"></div><div class="t" style="left:1053.83px;top:1709.04px;font-size:18.5px;line-height:18.5px;font-weight:400;color:#1d2a33;">13:40</div><div class="abs" style="left:1200.95px;top:1698px;width:1.5px;height:9px;background:#2f3a40"></div><div class="t" style="left:1178.53px;top:1709.04px;font-size:18.5px;line-height:18.5px;font-weight:400;color:#1d2a33;">13:45</div><div class="abs" style="left:1325.65px;top:1698px;width:1.5px;height:9px;background:#2f3a40"></div><div class="t" style="left:1303.23px;top:1709.04px;font-size:18.5px;line-height:18.5px;font-weight:400;color:#1d2a33;">13:50</div><div class="abs" style="left:1450.35px;top:1698px;width:1.5px;height:9px;background:#2f3a40"></div><div class="t" style="left:1427.93px;top:1709.04px;font-size:18.5px;line-height:18.5px;font-weight:400;color:#1d2a33;">13:55</div><div class="abs" style="left:1575.05px;top:1698px;width:1.5px;height:9px;background:#2f3a40"></div><div class="t" style="left:1552.63px;top:1709.04px;font-size:18.5px;line-height:18.5px;font-weight:400;color:#1d2a33;">14:00</div><div class="abs" style="left:1699.75px;top:1698px;width:1.5px;height:9px;background:#2f3a40"></div><div class="t" style="left:1677.33px;top:1709.04px;font-size:18.5px;line-height:18.5px;font-weight:400;color:#1d2a33;">14:05</div><div class="abs" style="left:1824.45px;top:1698px;width:1.5px;height:9px;background:#2f3a40"></div><div class="t" style="left:1802.03px;top:1709.04px;font-size:18.5px;line-height:18.5px;font-weight:400;color:#1d2a33;">14:10</div><div class="t" style="left:314.96px;top:1577.05px;width:53.09px;font-size:19.5px;line-height:19.5px;color:#8d959a;text-align:center;transform-origin:50% 50%;transform:rotate(-90deg) scaleX(1.011)">Errors</div><div class="abs" style="left:388px;top:1759px;width:19.6px;height:19.6px;border-radius:3px;background:#f9d77e"></div><div class="t" style="left:418.30px;top:1760.09px;font-size:19.5px;line-height:19.5px;font-weight:400;color:#1d2a33;">404</div><div class="abs" style="left:479.5px;top:1759px;width:19.6px;height:19.6px;border-radius:3px;background:#fbb04a"></div><div class="t" style="left:510.70px;top:1760.09px;font-size:19.5px;line-height:19.5px;font-weight:400;color:#1d2a33;">500</div><div class="abs" style="left:573px;top:1759px;width:19.6px;height:19.6px;border-radius:3px;background:#f8893a"></div><div class="t" style="left:604.00px;top:1760.09px;font-size:19.5px;line-height:19.5px;font-weight:400;color:#1d2a33;">501</div><div class="abs" style="left:665.6px;top:1759px;width:19.6px;height:19.6px;border-radius:3px;background:#ea4024"></div><div class="t" style="left:697.00px;top:1760.09px;font-size:19.5px;line-height:19.5px;font-weight:400;color:#1d2a33;">504</div><div class="abs" style="left:758px;top:1759px;width:19.6px;height:19.6px;border-radius:3px;background:#c2102c"></div><div class="t" style="left:789.00px;top:1760.09px;font-size:19.5px;line-height:19.5px;font-weight:400;color:#1d2a33;">Errors</div><div class="t" style="left:1994.70px;top:1367.88px;font-size:24px;line-height:24px;font-weight:400;color:#1d2a33;transform:scaleX(1.0204);">Dependency Map</div><svg class="abs" style="left:2216px;top:1375.6px" width="17" height="10"><path d="M0 0h17L8.5 10z" fill="#5f6b72"/></svg><div class="abs" style="left:1970.6px;top:1411.5px;width:1587px;height:1.6px;background:#e1e4e6"></div><svg class="abs" style="left:3409.90px;top:1363.90px" width="32" height="30" viewBox="0 0 32 30"><path d="M16.42 1.47A13.6 13.6 0 0 0 2.67 9.25 M2.67 20.75A13.6 13.6 0 0 0 16.42 28.53 M15.50 7.82A7.2 7.2 0 0 0 8.64 11.62 M8.64 18.38A7.2 7.2 0 0 0 15.50 22.18 M21.15 10.53A7.6 7.6 0 0 1 21.15 19.47 M26.57 7.48A13.8 13.8 0 0 1 26.57 22.52" fill="none" stroke="#66727a" stroke-width="3" /><circle cx="15" cy="15" r="2.1" fill="#66727a"/></svg><svg class="abs" style="left:3461px;top:1364px" width="30" height="28" viewBox="0 0 30 28"><g fill="none" stroke="#66727a" stroke-width="2.4"><path d="M4.2 16v9.8h20.6V16M14.5 19V3.2M7.6 10.2l6.9-7 6.9 7"/></g></svg>
<svg class="abs" style="left:3514px;top:1367px" width="25" height="25" viewBox="0 0 25 25"><g fill="none" stroke="#66727a" stroke-width="2.4"><path d="M2 9V2h7M2 2l7 7M23 9V2h-7M23 2l-7 7M2 16v7h7M2 23l7-7M23 16v7h-7M23 23l-7-7"/></g></svg><svg class="abs" style="left:0;top:0" width="3800" height="1930"><g fill="none"><path d="M2528.7 1526.7 C2578.4 1567.6 2600.0 1597.4 2680.0 1597.4" stroke="#c9cccf" stroke-width="1.3"/><path d="M2522.6 1549.6 C2570.9 1577.3 2600.0 1597.4 2680.0 1597.4" stroke="#c9cccf" stroke-width="1.3"/><path d="M2518.1 1573.5 C2566.4 1587.3 2600.0 1597.4 2680.0 1597.4" stroke="#c9cccf" stroke-width="1.3"/><path d="M2515.0 1597.3 C2564.7 1597.4 2600.0 1597.4 2680.0 1597.4" stroke="#c9cccf" stroke-width="1.3"/><path d="M2518.1 1621.5 C2566.4 1607.6 2600.0 1597.4 2680.0 1597.4" stroke="#c9cccf" stroke-width="1.3"/><path d="M2522.6 1645.4 C2570.9 1617.6 2600.0 1597.4 2680.0 1597.4" stroke="#c9cccf" stroke-width="1.3"/><path d="M2528.7 1668.8 C2578.4 1627.5 2600.0 1597.4 2680.0 1597.4" stroke="#c9cccf" stroke-width="1.3"/><defs><linearGradient id="lg1" x1="2625" y1="0" x2="2702" y2="0" gradientUnits="userSpaceOnUse"><stop offset="0" stop-color="#d0d0d0"/><stop offset="0.6" stop-color="#8a8a8a"/><stop offset="1" stop-color="#5a5a5a"/></linearGradient><linearGradient id="lg2" x1="2730" y1="0" x2="2800" y2="0" gradientUnits="userSpaceOnUse"><stop offset="0" stop-color="#555"/><stop offset="0.5" stop-color="#777"/><stop offset="1" stop-color="#c4c7ca"/></linearGradient></defs><path d="M2625 1597.4H2701" stroke="url(#lg1)" stroke-width="1.7"/><path d="M2700.6 1594.5 L2706.4 1597.4 L2700.6 1600.3000000000002z" fill="#111"/><path d="M2730.2 1597.4H2790" stroke="url(#lg2)" stroke-width="1.8"/><path d="M2742 1597.4 C2790 1597.4 2842.1 1538.2 2879.3 1478.9" stroke="#c4c7ca" stroke-width="1.3"/><path d="M2879.3 1478.9L2878.3 1486.6L2872.8 1483.2z" fill="#8a8f93" stroke="none"/><path d="M2742 1597.4 C2790 1597.4 2845.7 1551.2 2892.0 1498.7" stroke="#c4c7ca" stroke-width="1.3"/><path d="M2892.0 1498.7L2889.8 1506.1L2885.0 1501.8z" fill="#8a8f93" stroke="none"/><path d="M2742 1597.4 C2790 1597.4 2849.1 1562.1 2903.7 1518.3" stroke="#c4c7ca" stroke-width="1.3"/><path d="M2903.7 1518.3L2900.2 1525.1L2896.2 1520.1z" fill="#8a8f93" stroke="none"/><path d="M2742 1597.4 C2790 1597.4 2847.9 1574.4 2909.6 1541.4" stroke="#c4c7ca" stroke-width="1.3"/><path d="M2909.6 1541.4L2904.9 1547.5L2901.9 1541.9z" fill="#8a8f93" stroke="none"/><path d="M2742 1597.4 C2790 1597.4 2849.8 1583.5 2916.6 1562.6" stroke="#c4c7ca" stroke-width="1.3"/><path d="M2916.6 1562.6L2910.9 1567.8L2909.0 1561.7z" fill="#8a8f93" stroke="none"/><path d="M2742 1597.4 C2790 1597.4 2849.5 1592.9 2919.2 1586.0" stroke="#c4c7ca" stroke-width="1.3"/><path d="M2919.2 1586.0L2912.5 1589.8L2911.9 1583.5z" fill="#8a8f93" stroke="none"/><path d="M2742 1597.4 C2790 1597.4 2849.5 1602.0 2919.2 1609.3" stroke="#c4c7ca" stroke-width="1.3"/><path d="M2919.2 1609.3L2911.9 1611.8L2912.5 1605.4z" fill="#8a8f93" stroke="none"/><path d="M2742 1597.4 C2790 1597.4 2849.9 1611.6 2916.6 1632.7" stroke="#c4c7ca" stroke-width="1.3"/><path d="M2916.6 1632.7L2909.0 1633.6L2910.9 1627.5z" fill="#8a8f93" stroke="none"/><path d="M2742 1597.4 C2790 1597.4 2848.0 1620.6 2909.6 1653.8" stroke="#c4c7ca" stroke-width="1.3"/><path d="M2909.6 1653.8L2902.0 1653.3L2905.0 1647.7z" fill="#8a8f93" stroke="none"/><path d="M2742 1597.4 C2790 1597.4 2847.7 1631.9 2902.1 1675.9" stroke="#c4c7ca" stroke-width="1.3"/><path d="M2902.1 1675.9L2894.7 1673.9L2898.7 1669.0z" fill="#8a8f93" stroke="none"/><path d="M2742 1597.4 C2790 1597.4 2845.9 1644.0 2892.0 1696.7" stroke="#c4c7ca" stroke-width="1.3"/><path d="M2892.0 1696.7L2885.0 1693.5L2889.8 1689.3z" fill="#8a8f93" stroke="none"/><path d="M2742 1597.4 C2790 1597.4 2842.3 1657.3 2879.3 1716.8" stroke="#c4c7ca" stroke-width="1.3"/><path d="M2879.3 1716.8L2872.9 1712.5L2878.3 1709.1z" fill="#8a8f93" stroke="none"/><circle cx="2523.4" cy="1523" r="6.2" stroke="#777f84" stroke-width="2.2" fill="#fff"/><circle cx="2515.9" cy="1547.1" r="8.2" stroke="#3dbd5a" stroke-width="3" fill="#fff"/><circle cx="2511.4" cy="1572.2" r="8.2" stroke="#3dbd5a" stroke-width="3" fill="#fff"/><circle cx="2509.7" cy="1597.3" r="6.2" stroke="#777f84" stroke-width="2.2" fill="#fff"/><circle cx="2511.4" cy="1622.8" r="8.2" stroke="#3dbd5a" stroke-width="3" fill="#fff"/><circle cx="2515.9" cy="1647.9" r="8.2" stroke="#3dbd5a" stroke-width="3" fill="#fff"/><circle cx="2523.4" cy="1672.6" r="6.2" stroke="#777f84" stroke-width="2.2" fill="#fff"/><circle cx="2886.5" cy="1467.4" r="8.2" stroke="#3dbd5a" stroke-width="3" fill="#fff"/><circle cx="2901" cy="1488.5" r="8.2" stroke="#3dbd5a" stroke-width="3" fill="#fff"/><circle cx="2912.7" cy="1511" r="6.2" stroke="#777f84" stroke-width="2.2" fill="#fff"/><circle cx="2921.6" cy="1535" r="8.2" stroke="#3dbd5a" stroke-width="3" fill="#fff"/><circle cx="2927.7" cy="1559.2" r="6.2" stroke="#777f84" stroke-width="2.2" fill="#fff"/><circle cx="2930.7" cy="1584.8" r="6.2" stroke="#777f84" stroke-width="2.2" fill="#fff"/><circle cx="2930.7" cy="1610.5" r="6.2" stroke="#777f84" stroke-width="2.2" fill="#fff"/><circle cx="2927.7" cy="1636.2" r="6.2" stroke="#777f84" stroke-width="2.2" fill="#fff"/><circle cx="2921.6" cy="1660.3" r="8.2" stroke="#3dbd5a" stroke-width="3" fill="#fff"/><circle cx="2912.7" cy="1684.4" r="8.2" stroke="#e23a53" stroke-width="3" fill="#fff"/><circle cx="2901" cy="1706.9" r="8.2" stroke="#3dbd5a" stroke-width="3" fill="#fff"/><circle cx="2886.5" cy="1728.3" r="8.2" stroke="#3dbd5a" stroke-width="3" fill="#fff"/><circle cx="2720.6" cy="1597.4" r="7.7" stroke="#e23a53" stroke-width="3.4" fill="#fff"/></g></svg><div class="t" style="left:2345.02px;top:1502.82px;font-size:21px;line-height:21px;font-weight:700;color:#1b1f22;transform:scaleX(1.1127);">web-store-http</div><div class="t" style="left:2355.90px;top:1529.22px;font-size:21px;line-height:21px;font-weight:700;color:#1b1f22;transform:scaleX(1.0794);">payments-go</div><div class="t" style="left:2359.40px;top:1557.82px;font-size:21px;line-height:21px;font-weight:400;color:#1b1f22;transform:scaleX(1.0908);">io.shopist.ios</div><div class="t" style="left:2305.00px;top:1586.22px;font-size:21px;line-height:21px;font-weight:700;color:#1b1f22;transform:scaleX(1.0888);">api.payment.com</div><div class="t" style="left:2308.80px;top:1613.92px;font-size:21px;line-height:21px;font-weight:400;color:#1b1f22;transform:scaleX(1.1115);">io.shopist.android</div><div class="t" style="left:2299.20px;top:1642.22px;font-size:21px;line-height:21px;font-weight:700;color:#1b1f22;transform:scaleX(1.0864);">payment-postgres</div><div class="t" style="left:2358.30px;top:1667.92px;font-size:21px;line-height:21px;font-weight:400;color:#1b1f22;transform:scaleX(1.1000);">shopist-web-ui</div><div class="t" style="left:2900.32px;top:1441.82px;font-size:21px;line-height:21px;font-weight:400;color:#1b1f22;transform:scaleX(1.1126);">web-store-mongo</div><div class="t" style="left:2916.20px;top:1465.12px;font-size:21px;line-height:21px;font-weight:400;color:#1b1f22;transform:scaleX(1.1207);">shipping-producer</div><div class="t" style="left:2928.00px;top:1490.02px;font-size:21px;line-height:21px;font-weight:400;color:#1b1f22;transform:scaleX(1.1048);">notification-service</div><div class="t" style="left:2940.30px;top:1515.22px;font-size:21px;line-height:21px;font-weight:400;color:#1b1f22;transform:scaleX(1.0883);">delivery-api</div><div class="t" style="left:2944.92px;top:1543.52px;font-size:21px;line-height:21px;font-weight:700;color:#1b1f22;transform:scaleX(1.1134);">web-store-http</div><div class="t" style="left:2948.90px;top:1571.22px;font-size:21px;line-height:21px;font-weight:700;color:#1b1f22;transform:scaleX(1.0842);">payment-postgres</div><div class="t" style="left:2948.90px;top:1599.42px;font-size:21px;line-height:21px;font-weight:700;color:#1b1f22;transform:scaleX(1.0870);">api.payment.com</div><div class="t" style="left:2944.80px;top:1627.02px;font-size:21px;line-height:21px;font-weight:700;color:#1b1f22;transform:scaleX(1.0855);">payments-go</div><div class="t" style="left:2940.30px;top:1655.92px;font-size:21px;line-height:21px;font-weight:400;color:#1b1f22;transform:scaleX(1.0764);">ad-server</div><div class="t" style="left:2930.10px;top:1681.82px;font-size:21px;line-height:21px;font-weight:400;color:#1b1f22;transform:scaleX(1.1129);">inventory-api</div><div class="t" style="left:2916.70px;top:1707.22px;font-size:21px;line-height:21px;font-weight:400;color:#1b1f22;transform:scaleX(1.1256);">product-recommendation-lite</div><div class="t" style="left:2900.20px;top:1730.02px;font-size:21px;line-height:21px;font-weight:400;color:#1b1f22;transform:scaleX(1.1074);">shipping-queue-redis</div><div class="t" style="left:2645.07px;top:1616.61px;font-size:30px;line-height:30px;font-weight:400;color:#1b1f22;transform:scaleX(1.1475);">web-store</div>
<div class="t" style="left:294.00px;top:1870.90px;font-size:28px;line-height:28px;font-weight:400;color:#5f6b72;transform:scaleX(0.9638);">Resources</div>
<div class="t" style="left:511.60px;top:1870.90px;font-size:28px;line-height:28px;font-weight:400;color:#5f6b72;transform:scaleX(1.0246);">Deployments</div>
<div class="abs" style="left:694.6px;top:1866px;width:94.7px;height:35.8px;background:#f9d94a;border-radius:6px"></div>
<div class="t" style="left:705.50px;top:1874.57px;font-size:20px;line-height:20px;font-weight:700;color:#1d2a33;transform:scaleX(0.9567);">FAULTY</div>
<div class="t" style="left:876.80px;top:1870.90px;font-size:28px;line-height:28px;font-weight:400;color:#1d2a33;transform:scaleX(1.0134);">Error Tracking</div>
<div class="abs" style="left:1070.5px;top:1866px;width:83.1px;height:35.8px;background:#e5354f;border-radius:6px"></div>
<div class="t" style="left:1080.00px;top:1873.72px;font-size:21px;line-height:21px;font-weight:700;color:#fff;transform:scaleX(0.9614);">2 NEW</div>
<div class="abs" style="left:874.5px;top:1917px;width:281.3px;height:7px;background:#0b6bcb"></div>
<div class="t" style="left:1240.40px;top:1870.90px;font-size:28px;line-height:28px;font-weight:400;color:#5f6b72;transform:scaleX(1.0769);">Infrastructure</div>
<div class="t" style="left:1505.30px;top:1870.90px;font-size:28px;line-height:28px;font-weight:400;color:#5f6b72;transform:scaleX(1.0135);">Ruby Runtime Metrics</div>
<div class="t" style="left:1872.20px;top:1870.90px;font-size:28px;line-height:28px;font-weight:400;color:#5f6b72;transform:scaleX(1.0522);">Profiling</div>
<div class="t" style="left:2066.50px;top:1870.90px;font-size:28px;line-height:28px;font-weight:400;color:#5f6b72;transform:scaleX(0.9555);">Traces</div>
<div class="t" style="left:2234.60px;top:1870.90px;font-size:28px;line-height:28px;font-weight:400;color:#5f6b72;transform:scaleX(1.0166);">Log Patterns</div>
<svg class="abs" style="left:175px;top:245px" width="65" height="65" viewBox="0 0 65 65">
<g fill="#dedde2" stroke="#423b47" stroke-width="1.3" stroke-linejoin="round">
<path d="M15.5 24L18 13.5 26 9 36 7 43 13.5 41 17.5 43.5 26 41.5 33 35 36.5 27 37 26.5 45 19 44 16.5 38z"/>
<ellipse cx="13.6" cy="15.6" rx="5.6" ry="7.6" transform="rotate(-28 13.6 15.6)"/>
<ellipse cx="17.6" cy="49.8" rx="6" ry="8" transform="rotate(-22 17.6 49.8)"/>
<path d="M25.8 36.6L52.3 32.4 53.4 49.2 28.6 54.4z"/></g>
<path d="M36 7L43 13.5 41 17.5 37.5 12z" fill="#c9c7ce"/>
<path d="M30.2 51.6L30 47.2 34.2 45.4 38 42.4 41.4 44.2 44.6 40.6 47.2 42.6 50.3 37.2 50.7 47.6z" fill="#423b47"/>
<g fill="#423b47"><ellipse cx="27" cy="21" rx="2.2" ry="1.9"/><ellipse cx="37.8" cy="19.4" rx="1.9" ry="1.8"/><ellipse cx="38.4" cy="28.4" rx="2.6" ry="1.5"/></g>
<path d="M24.6 31.6Q31 35.8 38.6 33.6" fill="none" stroke="#423b47" stroke-width="1.3"/></svg><svg class="abs" style="left:0;top:0" width="260" height="1930"><circle cx="201.3" cy="542.7" r="8.6" fill="none" stroke="#a7a4ac" stroke-width="2.3"/><path d="M207.6 549L215 556.4" stroke="#a7a4ac" stroke-width="2.8" stroke-linecap="round"/><path fill="#a7a4ac" transform="translate(189 595) scale(1.21 1.31)" d="M5.5 0h4.2v3.5H5.5zM14.2 0h4.2v3.5h-4.2zM3.6 3.8h16.7l2.6 9.7.3 8.6H13.1v-9H9.2v9H0l.3-8.6z"/><rect x="189.8" y="664" width="27.6" height="21.6" rx="2.2" fill="none" stroke="#a7a4ac" stroke-width="1.9"/><rect x="189.8" y="664" width="27.6" height="6" rx="1.5" fill="#a7a4ac"/><rect x="193" y="672.3" width="2.6" height="2.4" fill="#a7a4ac"/><rect x="197.5" y="672.3" width="16.5" height="2.4" fill="#a7a4ac"/><rect x="193" y="676.4" width="2.6" height="2.4" fill="#a7a4ac"/><rect x="197.5" y="676.4" width="16.5" height="2.4" fill="#a7a4ac"/><rect x="193" y="680.5" width="2.6" height="2.4" fill="#a7a4ac"/><rect x="197.5" y="680.5" width="16.5" height="2.4" fill="#a7a4ac"/><path d="M190 728.8V750H218.6" fill="none" stroke="#a7a4ac" stroke-width="1.7"/><path d="M192.3 748V737.5L198.4 730.6 204.6 737 212 734 215.8 748z" fill="#a7a4ac"/><path d="M202.20 798.40 L198.90 804.12 L192.30 804.12 L189.00 798.40 L192.30 792.68 L198.90 792.68z" fill="#a7a4ac"/><path d="M210.00 812.20 L206.70 817.92 L200.10 817.92 L196.80 812.20 L200.10 806.48 L206.70 806.48z" fill="#a7a4ac"/><path d="M217.40 798.40 L214.50 803.42 L208.70 803.42 L205.80 798.40 L208.70 793.38 L214.50 793.38z" fill="none" stroke="#a7a4ac" stroke-width="1.9"/><path d="M214.00 798.40 L212.80 800.48 L210.40 800.48 L209.20 798.40 L210.40 796.32 L212.80 796.32z" fill="#a7a4ac"/><g fill="none" stroke="#a7a4ac" stroke-width="2.2"><path d="M209.20 858.66A12.4 12.4 0 1 1 192.26 875.60"/><path d="M190.79 871.55A12.4 12.4 0 0 1 195.03 859.90"/><path d="M208.06 865.16A6.6 6.6 0 1 1 201.85 862.90"/><path d="M203 869.4L214.5 857.8"/><path d="M210 857.5h4.8v4.8"/></g><circle cx="203" cy="869.4" r="2" fill="#a7a4ac"/><path d="M205.19 925.59A12.6 12.6 0 0 1 213.91 944.30" fill="none" stroke="#a7a4ac" stroke-width="2.8"/><path d="M191.16 942.31A12.6 12.6 0 0 1 201.25 925.52" fill="none" stroke="#a7a4ac" stroke-width="2.8" stroke-dasharray="2.2 2.2"/><path d="M200.3 940.5L213 923.5 206 942.5z" fill="#a7a4ac"/><path fill="#a7a4ac" d="M189.2 995.2h6.2a3.4 3.4 0 1 1 6.2 0h7.8v6.2a3.4 3.4 0 1 1 0 6.2v5.1h-7.6a3.2 3.2 0 0 0-6.2 0h-6.4z"/><g fill="#fff"><rect x="189.2" y="1053" width="28.5" height="3.8"/><rect x="189.2" y="1060" width="5.1" height="3.6"/><rect x="198.4" y="1060" width="19.3" height="3.6"/><rect x="198.4" y="1067.3" width="11" height="3.7"/><rect x="212.7" y="1067.3" width="5" height="3.7"/><rect x="203.9" y="1074.6" width="5" height="3.7"/></g><path d="M203.5 1124.5A6.3 6.3 0 1 0 198 1128.5L207 1131.5A5.6 5.6 0 1 1 202.5 1140" fill="none" stroke="#a7a4ac" stroke-width="2.1"/><path d="M199.5 1136.5l4.8 1.2-2.6 4.4z" fill="#a7a4ac"/><path fill="#a7a4ac" d="M195 1184h21.5l-4.8 21H191.5c-1.6 0-2.3-1.4-2-2.8z"/><path d="M192.6 1204.5l1.2-3.3h19" fill="none" stroke="#231c29" stroke-width="1.6"/><rect x="198" y="1188.6" width="13" height="2" fill="#231c29" transform="skewX(-12)" /><rect x="190.2" y="1247" width="4.4" height="2.6" fill="#a7a4ac"/><rect x="198.2" y="1247" width="4.4" height="2.6" fill="#a7a4ac"/><rect x="206.2" y="1247" width="4.4" height="2.6" fill="#a7a4ac"/><rect x="190.2" y="1254.7" width="4.4" height="2.6" fill="#a7a4ac"/><rect x="190.2" y="1262.3" width="4.4" height="2.6" fill="#a7a4ac"/><circle cx="207" cy="1262" r="7.4" fill="none" stroke="#a7a4ac" stroke-width="2.2"/><path d="M207 1262m-3.5 0a3.5 3.5 0 0 1 7 0z" fill="#a7a4ac"/><path d="M201.6 1267.4L195.6 1273.4" stroke="#a7a4ac" stroke-width="2.6" stroke-linecap="round"/><path d="M203.3 1312.5l10 3.6v9.4c0 6.2-4.4 10.6-10 12.8-5.6-2.2-10-6.6-10-12.8v-9.4z" fill="none" stroke="#a7a4ac" stroke-width="2"/><path d="M203.3 1313v25M193.8 1320.5l9.5 4.5M193.8 1327.2l9.5 4.5M195 1333.5l7 3.4" stroke="#a7a4ac" stroke-width="2"/><circle cx="203.30" cy="1379.10" r="2.3" fill="#a7a4ac"/><circle cx="211.93" cy="1382.67" r="2.3" fill="#a7a4ac"/><circle cx="215.50" cy="1391.30" r="2.3" fill="#a7a4ac"/><circle cx="211.93" cy="1399.93" r="2.3" fill="#a7a4ac"/><circle cx="203.30" cy="1403.50" r="2.3" fill="#a7a4ac"/><circle cx="194.67" cy="1399.93" r="2.3" fill="#a7a4ac"/><circle cx="191.10" cy="1391.30" r="2.3" fill="#a7a4ac"/><circle cx="194.67" cy="1382.67" r="2.3" fill="#a7a4ac"/><circle cx="203.3" cy="1391.3" r="9.6" fill="#a7a4ac"/><g fill="none" stroke="#221b28" stroke-width="1.3"><path d="M194 1391.3h18.6M203.3 1382v18.6"/><ellipse cx="203.3" cy="1391.3" rx="4.2" ry="9"/></g><path d="M191.5 1809.5h25v17.5h-14.5l-6.5 5.5v-5.5h-4z" fill="none" stroke="#a7a4ac" stroke-width="2.3" stroke-linejoin="round"/><circle cx="203.8" cy="1884.5" r="12.6" fill="#a7a4ac"/><text x="203.8" y="1891.8" text-anchor="middle" font-family="Liberation Sans" font-weight="700" font-size="19.5" fill="#120818">?</text></svg></body></html>
